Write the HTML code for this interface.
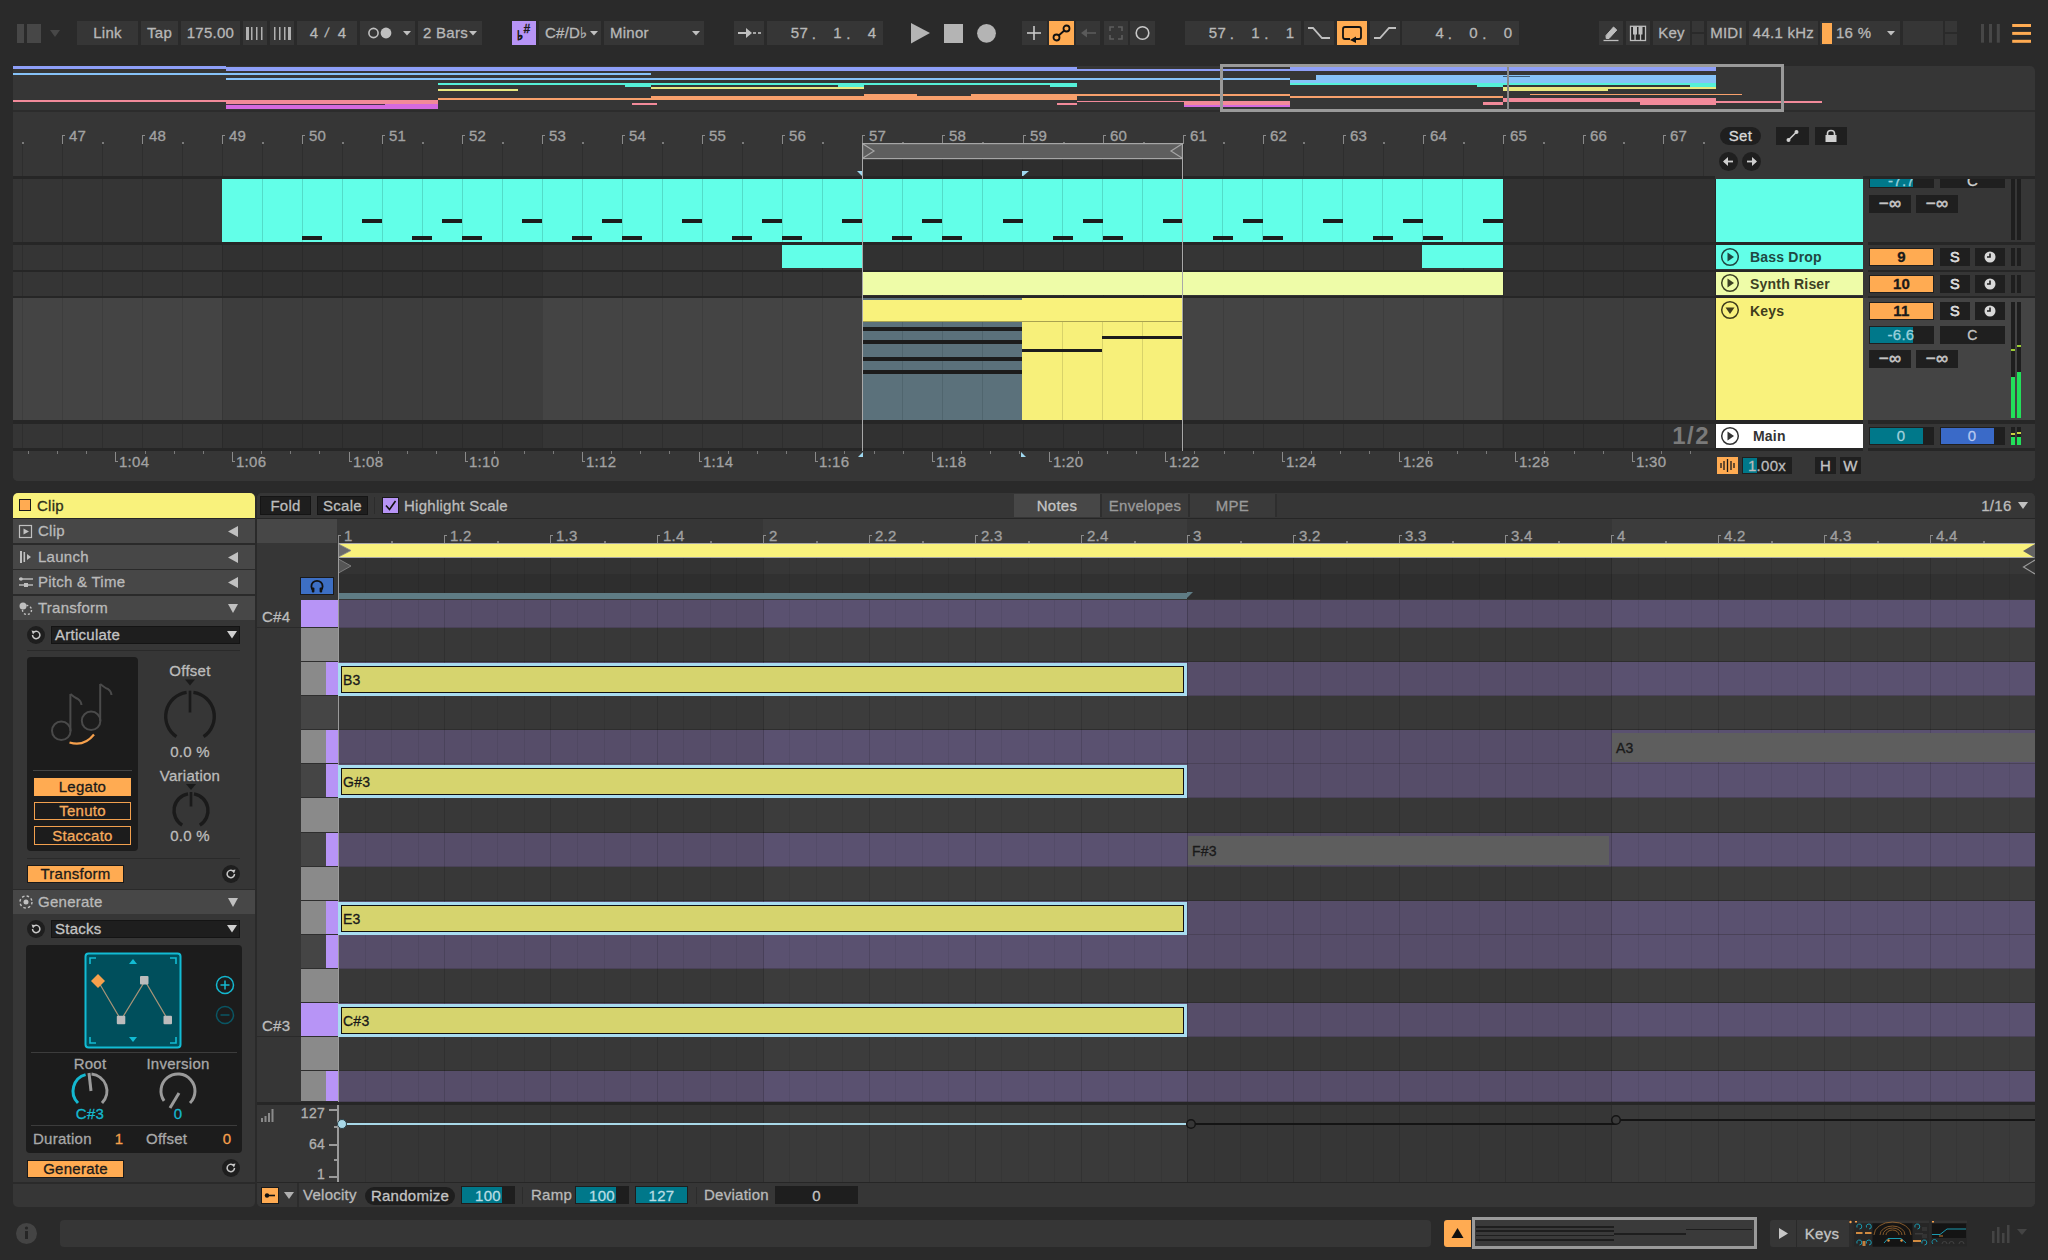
<!DOCTYPE html><html><head><meta charset="utf-8"><style>
html,body{margin:0;padding:0;}
body{width:2048px;height:1260px;background:#2a2a2a;position:relative;overflow:hidden;font-family:"Liberation Sans",sans-serif;}
body>div,body>svg{position:absolute;}
body>div{-webkit-text-stroke-width:0.3px;letter-spacing:0.26px;}
</style></head><body>
<div style="left:17px;top:24px;width:7px;height:19px;background:#474747;"></div>
<div style="left:27px;top:24px;width:14px;height:19px;background:#474747;"></div>
<svg style="left:49px;top:29px;" width="12" height="9" viewBox="0 0 12 9"><polygon points="1,1 11,1 6,8" fill="#474747"/></svg>
<div style="left:77px;top:21px;width:61px;height:24px;background:#363636;"></div>
<div style="left:-392.5px;width:1000px;text-align:center;top:18.2px;height:30px;line-height:30px;font-size:15px;color:#b8b8b8;font-weight:400;font-family:'Liberation Sans',sans-serif;white-space:pre;">Link</div>
<div style="left:141px;top:21px;width:37px;height:24px;background:#363636;"></div>
<div style="left:-340.5px;width:1000px;text-align:center;top:18.2px;height:30px;line-height:30px;font-size:15px;color:#b8b8b8;font-weight:400;font-family:'Liberation Sans',sans-serif;white-space:pre;">Tap</div>
<div style="left:181px;top:21px;width:59px;height:24px;background:#363636;"></div>
<div style="left:-289.5px;width:1000px;text-align:center;top:18.2px;height:30px;line-height:30px;font-size:15px;color:#b8b8b8;font-weight:400;font-family:'Liberation Sans',sans-serif;white-space:pre;">175.00</div>
<div style="left:243px;top:21px;width:24px;height:24px;background:#363636;"></div>
<div style="left:270px;top:21px;width:24px;height:24px;background:#363636;"></div>
<svg style="left:243px;top:21px;" width="24" height="24" viewBox="0 0 24 24"><rect x="3" y="6" width="3" height="13" fill="#b0b0b0"/><rect x="8" y="6" width="1.5" height="13" fill="#b0b0b0"/><rect x="13" y="6" width="1.5" height="13" fill="#b0b0b0"/><rect x="18" y="6" width="1.5" height="13" fill="#b0b0b0"/></svg>
<svg style="left:270px;top:21px;" width="24" height="24" viewBox="0 0 24 24"><rect x="4" y="6" width="1.5" height="13" fill="#b0b0b0"/><rect x="9" y="6" width="1.5" height="13" fill="#b0b0b0"/><rect x="14" y="6" width="1.5" height="13" fill="#b0b0b0"/><rect x="18" y="6" width="3" height="13" fill="#b0b0b0"/></svg>
<div style="left:297px;top:21px;width:60px;height:24px;background:#363636;"></div>
<div style="left:-186px;width:1000px;text-align:center;top:18.2px;height:30px;line-height:30px;font-size:15px;color:#b8b8b8;font-weight:400;font-family:'Liberation Sans',sans-serif;white-space:pre;">4</div>
<div style="left:-173px;width:1000px;text-align:center;top:20.2px;height:26px;line-height:26px;font-size:13px;color:#b8b8b8;font-weight:400;font-family:'Liberation Sans',sans-serif;white-space:pre;transform:skewX(-10deg)">/</div>
<div style="left:-158px;width:1000px;text-align:center;top:18.2px;height:30px;line-height:30px;font-size:15px;color:#b8b8b8;font-weight:400;font-family:'Liberation Sans',sans-serif;white-space:pre;">4</div>
<div style="left:360px;top:21px;width:55px;height:24px;background:#363636;"></div>
<svg style="left:360px;top:21px;" width="55" height="24" viewBox="0 0 55 24"><circle cx="13.5" cy="12" r="4.6" fill="none" stroke="#c0c0c0" stroke-width="1.6"/><circle cx="26" cy="12" r="5.4" fill="#c0c0c0"/><polygon points="43,10 51,10 47,14.5" fill="#c0c0c0"/></svg>
<div style="left:418px;top:21px;width:64px;height:24px;background:#363636;"></div>
<div style="left:423px;top:18.2px;height:30px;line-height:30px;font-size:15px;color:#b8b8b8;font-weight:400;font-family:'Liberation Sans',sans-serif;white-space:pre;">2 Bars</div>
<svg style="left:418px;top:21px;" width="64" height="24" viewBox="0 0 64 24"><polygon points="51,10 59,10 55,14.5" fill="#c0c0c0"/></svg>
<div style="left:512px;top:21px;width:24px;height:24px;background:#b794f6;"></div>
<div style="left:20px;width:1000px;text-align:center;top:23.0px;height:26px;line-height:26px;font-size:13px;color:#1a1a1a;font-weight:700;font-family:'Liberation Sans',sans-serif;white-space:pre;">♭</div>
<div style="left:27px;width:1000px;text-align:center;top:17.0px;height:24px;line-height:24px;font-size:12px;color:#1a1a1a;font-weight:700;font-family:'Liberation Sans',sans-serif;white-space:pre;">#</div>
<div style="left:539px;top:21px;width:62px;height:24px;background:#363636;"></div>
<div style="left:545px;top:18.2px;height:30px;line-height:30px;font-size:15px;color:#b8b8b8;font-weight:400;font-family:'Liberation Sans',sans-serif;white-space:pre;">C#/D♭</div>
<svg style="left:539px;top:21px;" width="62" height="24" viewBox="0 0 62 24"><polygon points="51,10 59,10 55,14.5" fill="#c0c0c0"/></svg>
<div style="left:604px;top:21px;width:100px;height:24px;background:#363636;"></div>
<div style="left:610px;top:18.2px;height:30px;line-height:30px;font-size:15px;color:#b8b8b8;font-weight:400;font-family:'Liberation Sans',sans-serif;white-space:pre;">Minor</div>
<svg style="left:604px;top:21px;" width="100" height="24" viewBox="0 0 100 24"><polygon points="88,10 96,10 92,14.5" fill="#c0c0c0"/></svg>
<div style="left:734px;top:21px;width:30px;height:24px;background:#363636;"></div>
<svg style="left:734px;top:21px;" width="30" height="24" viewBox="0 0 30 24"><line x1="4" y1="12" x2="16" y2="12" stroke="#c0c0c0" stroke-width="2"/><polygon points="12,7 18,12 12,17" fill="#c0c0c0"/><line x1="19" y1="12" x2="22" y2="12" stroke="#c0c0c0" stroke-width="1.6"/><line x1="24" y1="12" x2="27" y2="12" stroke="#c0c0c0" stroke-width="1.6"/></svg>
<div style="left:767px;top:21px;width:116px;height:24px;background:#363636;"></div>
<div style="left:-192px;width:1000px;text-align:right;top:18.2px;height:30px;line-height:30px;font-size:15px;color:#b8b8b8;font-weight:400;font-family:'Liberation Sans',sans-serif;white-space:pre;">57</div>
<div style="left:314px;width:1000px;text-align:center;top:19.2px;height:30px;line-height:30px;font-size:15px;color:#b8b8b8;font-weight:400;font-family:'Liberation Sans',sans-serif;white-space:pre;">.</div>
<div style="left:337.5px;width:1000px;text-align:center;top:18.2px;height:30px;line-height:30px;font-size:15px;color:#b8b8b8;font-weight:400;font-family:'Liberation Sans',sans-serif;white-space:pre;">1</div>
<div style="left:348.5px;width:1000px;text-align:center;top:19.2px;height:30px;line-height:30px;font-size:15px;color:#b8b8b8;font-weight:400;font-family:'Liberation Sans',sans-serif;white-space:pre;">.</div>
<div style="left:372px;width:1000px;text-align:center;top:18.2px;height:30px;line-height:30px;font-size:15px;color:#b8b8b8;font-weight:400;font-family:'Liberation Sans',sans-serif;white-space:pre;">4</div>
<svg style="left:905px;top:21px;" width="100" height="24" viewBox="0 0 100 24"><polygon points="6,2 25,12 6,22.5" fill="#b4b4b4"/><rect x="39" y="3" width="19" height="19" fill="#b4b4b4"/><circle cx="81.5" cy="12.3" r="9.4" fill="#b4b4b4"/></svg>
<div style="left:1022px;top:21px;width:25px;height:24px;background:#363636;"></div>
<svg style="left:1022px;top:21px;" width="25" height="24" viewBox="0 0 25 24"><line x1="5" y1="12" x2="19" y2="12" stroke="#c8c8c8" stroke-width="1.6"/><line x1="12" y1="5" x2="12" y2="19" stroke="#c8c8c8" stroke-width="1.6"/></svg>
<div style="left:1049px;top:21px;width:25px;height:24px;background:#ffab52;"></div>
<svg style="left:1049px;top:21px;" width="25" height="24" viewBox="0 0 25 24"><line x1="8" y1="16" x2="17" y2="8" stroke="#111" stroke-width="1.8"/><circle cx="7.5" cy="16.5" r="3" fill="#ffab52" stroke="#111" stroke-width="1.8"/><circle cx="17.5" cy="7.5" r="3" fill="#ffab52" stroke="#111" stroke-width="1.8"/></svg>
<div style="left:1076px;top:21px;width:24px;height:24px;background:#363636;"></div>
<svg style="left:1076px;top:21px;" width="24" height="24" viewBox="0 0 24 24"><line x1="8" y1="12" x2="20" y2="12" stroke="#5a5a5a" stroke-width="1.6"/><polygon points="5,12 11,7.5 11,16.5" fill="#5a5a5a"/></svg>
<div style="left:1104px;top:21px;width:24px;height:24px;background:#363636;"></div>
<svg style="left:1104px;top:21px;" width="24" height="24" viewBox="0 0 24 24"><path d="M6,10 V6 H10 M14,6 H18 V10 M18,14 V18 H14 M10,18 H6 V14" fill="none" stroke="#5e5e5e" stroke-width="1.6"/></svg>
<div style="left:1130px;top:21px;width:25px;height:24px;background:#363636;"></div>
<svg style="left:1130px;top:21px;" width="25" height="24" viewBox="0 0 25 24"><circle cx="12.5" cy="12" r="6.3" fill="none" stroke="#c8c8c8" stroke-width="1.6"/></svg>
<div style="left:1185px;top:21px;width:116px;height:24px;background:#363636;"></div>
<div style="left:226px;width:1000px;text-align:right;top:18.2px;height:30px;line-height:30px;font-size:15px;color:#b8b8b8;font-weight:400;font-family:'Liberation Sans',sans-serif;white-space:pre;">57</div>
<div style="left:732px;width:1000px;text-align:center;top:19.2px;height:30px;line-height:30px;font-size:15px;color:#b8b8b8;font-weight:400;font-family:'Liberation Sans',sans-serif;white-space:pre;">.</div>
<div style="left:755.5px;width:1000px;text-align:center;top:18.2px;height:30px;line-height:30px;font-size:15px;color:#b8b8b8;font-weight:400;font-family:'Liberation Sans',sans-serif;white-space:pre;">1</div>
<div style="left:766.5px;width:1000px;text-align:center;top:19.2px;height:30px;line-height:30px;font-size:15px;color:#b8b8b8;font-weight:400;font-family:'Liberation Sans',sans-serif;white-space:pre;">.</div>
<div style="left:790px;width:1000px;text-align:center;top:18.2px;height:30px;line-height:30px;font-size:15px;color:#b8b8b8;font-weight:400;font-family:'Liberation Sans',sans-serif;white-space:pre;">1</div>
<div style="left:1304px;top:21px;width:30px;height:24px;background:#363636;"></div>
<svg style="left:1304px;top:21px;" width="30" height="24" viewBox="0 0 30 24"><path d="M4,7 H9 L18,17 H26" fill="none" stroke="#c0c0c0" stroke-width="1.8"/></svg>
<div style="left:1337px;top:21px;width:30px;height:24px;background:#ffab52;"></div>
<svg style="left:1337px;top:21px;" width="30" height="24" viewBox="0 0 30 24"><path d="M13,18 H8 Q6,18 6,16 V8 Q6,6 8,6 H22 Q24,6 24,8 V16 Q24,18 22,18 H19" fill="none" stroke="#111" stroke-width="1.8"/><polygon points="13,19 19,15.5 19,22" fill="#111"/></svg>
<div style="left:1370px;top:21px;width:30px;height:24px;background:#363636;"></div>
<svg style="left:1370px;top:21px;" width="30" height="24" viewBox="0 0 30 24"><path d="M4,17 H10 L19,7 H26" fill="none" stroke="#c0c0c0" stroke-width="1.8"/></svg>
<div style="left:1402px;top:21px;width:117px;height:24px;background:#363636;"></div>
<div style="left:444px;width:1000px;text-align:right;top:18.2px;height:30px;line-height:30px;font-size:15px;color:#b8b8b8;font-weight:400;font-family:'Liberation Sans',sans-serif;white-space:pre;">4</div>
<div style="left:950px;width:1000px;text-align:center;top:19.2px;height:30px;line-height:30px;font-size:15px;color:#b8b8b8;font-weight:400;font-family:'Liberation Sans',sans-serif;white-space:pre;">.</div>
<div style="left:973.5px;width:1000px;text-align:center;top:18.2px;height:30px;line-height:30px;font-size:15px;color:#b8b8b8;font-weight:400;font-family:'Liberation Sans',sans-serif;white-space:pre;">0</div>
<div style="left:984.5px;width:1000px;text-align:center;top:19.2px;height:30px;line-height:30px;font-size:15px;color:#b8b8b8;font-weight:400;font-family:'Liberation Sans',sans-serif;white-space:pre;">.</div>
<div style="left:1008px;width:1000px;text-align:center;top:18.2px;height:30px;line-height:30px;font-size:15px;color:#b8b8b8;font-weight:400;font-family:'Liberation Sans',sans-serif;white-space:pre;">0</div>
<div style="left:1599px;top:21px;width:24px;height:24px;background:#363636;"></div>
<svg style="left:1599px;top:21px;" width="24" height="24" viewBox="0 0 24 24"><path d="M7,14.5 L14.5,6 L17.8,9 L10,17.5 L7.2,17.5 Z" fill="#bdbdbd" stroke="#bdbdbd" stroke-width="1" stroke-linejoin="round"/><line x1="4.5" y1="19.5" x2="19.5" y2="19.5" stroke="#bdbdbd" stroke-width="1.3"/></svg>
<div style="left:1626px;top:21px;width:24px;height:24px;background:#363636;"></div>
<svg style="left:1626px;top:21px;" width="24" height="24" viewBox="0 0 24 24"><rect x="4.5" y="5.3" width="15" height="14.2" fill="#262626" stroke="#bdbdbd" stroke-width="1.3"/><rect x="7" y="5.5" width="4" height="8" fill="#bdbdbd"/><rect x="12.5" y="5.5" width="4" height="8" fill="#bdbdbd"/><rect x="8.4" y="12" width="1.3" height="7.5" fill="#bdbdbd"/><rect x="13.9" y="12" width="1.3" height="7.5" fill="#bdbdbd"/></svg>
<div style="left:1653px;top:21px;width:37px;height:24px;background:#363636;"></div>
<div style="left:1171.5px;width:1000px;text-align:center;top:18.2px;height:30px;line-height:30px;font-size:15px;color:#b8b8b8;font-weight:400;font-family:'Liberation Sans',sans-serif;white-space:pre;">Key</div>
<div style="left:1692px;top:21px;width:12px;height:11px;background:#363636;"></div>
<div style="left:1692px;top:34px;width:12px;height:11px;background:#363636;"></div>
<div style="left:1707px;top:21px;width:39px;height:24px;background:#363636;"></div>
<div style="left:1226.5px;width:1000px;text-align:center;top:18.2px;height:30px;line-height:30px;font-size:15px;color:#b8b8b8;font-weight:400;font-family:'Liberation Sans',sans-serif;white-space:pre;">MIDI</div>
<div style="left:1749px;top:21px;width:69px;height:24px;background:#363636;"></div>
<div style="left:1283.5px;width:1000px;text-align:center;top:18.2px;height:30px;line-height:30px;font-size:15px;color:#b8b8b8;font-weight:400;font-family:'Liberation Sans',sans-serif;white-space:pre;">44.1 kHz</div>
<div style="left:1820px;top:21px;width:80px;height:24px;background:#363636;"></div>
<div style="left:1822px;top:23px;width:10px;height:21px;background:#ffab52;"></div>
<div style="left:1836px;top:18.2px;height:30px;line-height:30px;font-size:15px;color:#b8b8b8;font-weight:400;font-family:'Liberation Sans',sans-serif;white-space:pre;">16 %</div>
<svg style="left:1820px;top:21px;" width="80" height="24" viewBox="0 0 80 24"><polygon points="67,10 75,10 71,14.5" fill="#c0c0c0"/></svg>
<div style="left:1903px;top:21px;width:40px;height:24px;background:#363636;"></div>
<div style="left:1945px;top:21px;width:12px;height:11px;background:#363636;"></div>
<div style="left:1945px;top:34px;width:12px;height:11px;background:#363636;"></div>
<svg style="left:1978px;top:21px;" width="26" height="24" viewBox="0 0 26 24"><rect x="3" y="3" width="3" height="18.7" fill="#474747"/><rect x="11" y="3" width="3" height="18.7" fill="#474747"/><rect x="18.8" y="3" width="3" height="18.7" fill="#474747"/></svg>
<svg style="left:2010px;top:21px;" width="24" height="24" viewBox="0 0 24 24"><rect x="2.2" y="3" width="18.8" height="3" fill="#ffab52"/><rect x="2.2" y="10.9" width="18.8" height="3" fill="#ffab52"/><rect x="2.2" y="18.8" width="18.8" height="3" fill="#ffab52"/></svg>
<div style="left:13px;top:66px;width:2022px;height:415px;background:#363636;border-radius:5px;"></div>
<div style="left:13px;top:66px;width:213px;height:3px;background:#8e9ff8;"></div>
<div style="left:13px;top:73px;width:213px;height:2px;background:#86c2f8;"></div>
<div style="left:13px;top:100px;width:213px;height:2px;background:#f28a9a;"></div>
<div style="left:226px;top:67px;width:212px;height:4px;background:#8e9ff8;"></div>
<div style="left:226px;top:73px;width:212px;height:2px;background:#86c2f8;"></div>
<div style="left:226px;top:78px;width:212px;height:2px;background:#86c2f8;"></div>
<div style="left:226px;top:100px;width:212px;height:4px;background:#f28a9a;"></div>
<div style="left:226px;top:104px;width:212px;height:5px;background:#d46ae0;"></div>
<div style="left:226px;top:104px;width:159px;height:1px;background:#4a3050;"></div>
<div style="left:438px;top:67px;width:213px;height:4px;background:#8e9ff8;"></div>
<div style="left:438px;top:73px;width:213px;height:2px;background:#86c2f8;"></div>
<div style="left:438px;top:78px;width:213px;height:2px;background:#86c2f8;"></div>
<div style="left:438px;top:83px;width:213px;height:2px;background:#55f0d8;"></div>
<div style="left:625px;top:83px;width:26px;height:4px;background:#55f0d8;"></div>
<div style="left:438px;top:89px;width:80px;height:2px;background:#e8e880;"></div>
<div style="left:438px;top:98px;width:213px;height:2px;background:#f8a06c;"></div>
<div style="left:632px;top:103px;width:25px;height:2px;background:#f28a9a;"></div>
<div style="left:651px;top:67px;width:213px;height:4px;background:#8e9ff8;"></div>
<div style="left:651px;top:78px;width:213px;height:2px;background:#86c2f8;"></div>
<div style="left:651px;top:83px;width:213px;height:2px;background:#55f0d8;"></div>
<div style="left:838px;top:83px;width:26px;height:4px;background:#55f0d8;"></div>
<div style="left:651px;top:87px;width:213px;height:2px;background:#e8e880;"></div>
<div style="left:651px;top:96px;width:213px;height:4px;background:#f8a06c;"></div>
<div style="left:864px;top:67px;width:213px;height:4px;background:#8e9ff8;"></div>
<div style="left:864px;top:78px;width:213px;height:2px;background:#86c2f8;"></div>
<div style="left:864px;top:83px;width:213px;height:2px;background:#55f0d8;"></div>
<div style="left:1050px;top:83px;width:27px;height:4px;background:#55f0d8;"></div>
<div style="left:864px;top:94px;width:53px;height:6px;background:#f8a06c;"></div>
<div style="left:917px;top:96px;width:54px;height:4px;background:#f8a06c;"></div>
<div style="left:971px;top:94px;width:106px;height:6px;background:#f8a06c;"></div>
<div style="left:1057px;top:103px;width:20px;height:2px;background:#f28a9a;"></div>
<div style="left:1077px;top:69px;width:213px;height:2px;background:#8e9ff8;"></div>
<div style="left:1077px;top:78px;width:213px;height:2px;background:#86c2f8;"></div>
<div style="left:1077px;top:94px;width:213px;height:2px;background:#f8a06c;"></div>
<div style="left:1077px;top:101px;width:213px;height:1px;background:#f28a9a;"></div>
<div style="left:1184px;top:101px;width:106px;height:4px;background:#f28a9a;"></div>
<div style="left:1184px;top:105px;width:106px;height:2px;background:#d46ae0;"></div>
<div style="left:1290px;top:67px;width:213px;height:4px;background:#8e9ff8;"></div>
<div style="left:1290px;top:80px;width:26px;height:3px;background:#86c2f8;"></div>
<div style="left:1316px;top:75px;width:187px;height:8px;background:#86c2f8;"></div>
<div style="left:1290px;top:83px;width:213px;height:2px;background:#55f0d8;"></div>
<div style="left:1477px;top:83px;width:26px;height:4px;background:#55f0d8;"></div>
<div style="left:1290px;top:96px;width:213px;height:2px;background:#f8a06c;"></div>
<div style="left:1483px;top:102px;width:20px;height:3px;background:#f28a9a;"></div>
<div style="left:1503px;top:67px;width:213px;height:4px;background:#8e9ff8;"></div>
<div style="left:1503px;top:75px;width:213px;height:8px;background:#86c2f8;"></div>
<div style="left:1503px;top:76px;width:27px;height:1px;background:#3a5a7a;"></div>
<div style="left:1503px;top:83px;width:213px;height:2px;background:#55f0d8;"></div>
<div style="left:1690px;top:83px;width:26px;height:5px;background:#55f0d8;"></div>
<div style="left:1503px;top:87px;width:213px;height:2px;background:#e8e880;"></div>
<div style="left:1503px;top:89px;width:105px;height:2px;background:#e8e880;"></div>
<div style="left:1530px;top:94px;width:212px;height:1px;background:#f8a06c;"></div>
<div style="left:1503px;top:98px;width:213px;height:4px;background:#f28a9a;"></div>
<div style="left:1640px;top:101px;width:76px;height:4px;background:#f28a9a;"></div>
<div style="left:1716px;top:101px;width:106px;height:2px;background:#f28a9a;"></div>
<div style="left:226px;top:227px;width:-160px;height:-155px;background:#3a4aa8;"></div>
<div style="left:438px;top:439px;width:-372px;height:-367px;background:#3a4aa8;"></div>
<div style="left:651px;top:652px;width:-585px;height:-580px;background:#3a4aa8;"></div>
<div style="left:864px;top:865px;width:-798px;height:-793px;background:#3a4aa8;"></div>
<div style="left:1077px;top:1078px;width:-1011px;height:-1006px;background:#3a4aa8;"></div>
<div style="left:1290px;top:1291px;width:-1224px;height:-1219px;background:#3a4aa8;"></div>
<div style="left:1503px;top:1504px;width:-1437px;height:-1432px;background:#3a4aa8;"></div>
<div style="left:13px;top:110px;width:2022px;height:2px;background:#2c2c2c;"></div>
<div style="left:1220px;top:64px;width:564px;height:48px;background:transparent;border:3px solid #9a9a9a;box-sizing:border-box;"></div>
<div style="left:1507px;top:67px;width:2px;height:43px;background:#8a8a8a;"></div>
<div style="left:13px;top:112px;width:1702px;height:64px;background:#363636;"></div>
<div style="left:69px;top:121.0px;height:30px;line-height:30px;font-size:15px;color:#a2a2a2;font-weight:400;font-family:'Liberation Sans',sans-serif;white-space:pre;">47</div>
<div style="left:62px;top:135px;width:1px;height:9px;background:#8a8a8a;"></div>
<div style="left:62px;top:135px;width:3px;height:1px;background:#8a8a8a;"></div>
<div style="left:62px;top:144px;width:1px;height:32px;background:#2e2e2e;"></div>
<div style="left:102px;top:142px;width:2px;height:2px;background:#7a7a7a;"></div>
<div style="left:102px;top:144px;width:1px;height:32px;background:#2e2e2e;"></div>
<div style="left:149px;top:121.0px;height:30px;line-height:30px;font-size:15px;color:#a2a2a2;font-weight:400;font-family:'Liberation Sans',sans-serif;white-space:pre;">48</div>
<div style="left:142px;top:135px;width:1px;height:9px;background:#8a8a8a;"></div>
<div style="left:142px;top:135px;width:3px;height:1px;background:#8a8a8a;"></div>
<div style="left:142px;top:144px;width:1px;height:32px;background:#2e2e2e;"></div>
<div style="left:182px;top:142px;width:2px;height:2px;background:#7a7a7a;"></div>
<div style="left:182px;top:144px;width:1px;height:32px;background:#2e2e2e;"></div>
<div style="left:229px;top:121.0px;height:30px;line-height:30px;font-size:15px;color:#a2a2a2;font-weight:400;font-family:'Liberation Sans',sans-serif;white-space:pre;">49</div>
<div style="left:222px;top:135px;width:1px;height:9px;background:#8a8a8a;"></div>
<div style="left:222px;top:135px;width:3px;height:1px;background:#8a8a8a;"></div>
<div style="left:222px;top:144px;width:1px;height:32px;background:#2e2e2e;"></div>
<div style="left:262px;top:142px;width:2px;height:2px;background:#7a7a7a;"></div>
<div style="left:262px;top:144px;width:1px;height:32px;background:#2e2e2e;"></div>
<div style="left:309px;top:121.0px;height:30px;line-height:30px;font-size:15px;color:#a2a2a2;font-weight:400;font-family:'Liberation Sans',sans-serif;white-space:pre;">50</div>
<div style="left:302px;top:135px;width:1px;height:9px;background:#8a8a8a;"></div>
<div style="left:302px;top:135px;width:3px;height:1px;background:#8a8a8a;"></div>
<div style="left:302px;top:144px;width:1px;height:32px;background:#2e2e2e;"></div>
<div style="left:342px;top:142px;width:2px;height:2px;background:#7a7a7a;"></div>
<div style="left:342px;top:144px;width:1px;height:32px;background:#2e2e2e;"></div>
<div style="left:389px;top:121.0px;height:30px;line-height:30px;font-size:15px;color:#a2a2a2;font-weight:400;font-family:'Liberation Sans',sans-serif;white-space:pre;">51</div>
<div style="left:382px;top:135px;width:1px;height:9px;background:#8a8a8a;"></div>
<div style="left:382px;top:135px;width:3px;height:1px;background:#8a8a8a;"></div>
<div style="left:382px;top:144px;width:1px;height:32px;background:#2e2e2e;"></div>
<div style="left:422px;top:142px;width:2px;height:2px;background:#7a7a7a;"></div>
<div style="left:422px;top:144px;width:1px;height:32px;background:#2e2e2e;"></div>
<div style="left:469px;top:121.0px;height:30px;line-height:30px;font-size:15px;color:#a2a2a2;font-weight:400;font-family:'Liberation Sans',sans-serif;white-space:pre;">52</div>
<div style="left:462px;top:135px;width:1px;height:9px;background:#8a8a8a;"></div>
<div style="left:462px;top:135px;width:3px;height:1px;background:#8a8a8a;"></div>
<div style="left:462px;top:144px;width:1px;height:32px;background:#2e2e2e;"></div>
<div style="left:502px;top:142px;width:2px;height:2px;background:#7a7a7a;"></div>
<div style="left:502px;top:144px;width:1px;height:32px;background:#2e2e2e;"></div>
<div style="left:549px;top:121.0px;height:30px;line-height:30px;font-size:15px;color:#a2a2a2;font-weight:400;font-family:'Liberation Sans',sans-serif;white-space:pre;">53</div>
<div style="left:542px;top:135px;width:1px;height:9px;background:#8a8a8a;"></div>
<div style="left:542px;top:135px;width:3px;height:1px;background:#8a8a8a;"></div>
<div style="left:542px;top:144px;width:1px;height:32px;background:#2e2e2e;"></div>
<div style="left:582px;top:142px;width:2px;height:2px;background:#7a7a7a;"></div>
<div style="left:582px;top:144px;width:1px;height:32px;background:#2e2e2e;"></div>
<div style="left:629px;top:121.0px;height:30px;line-height:30px;font-size:15px;color:#a2a2a2;font-weight:400;font-family:'Liberation Sans',sans-serif;white-space:pre;">54</div>
<div style="left:622px;top:135px;width:1px;height:9px;background:#8a8a8a;"></div>
<div style="left:622px;top:135px;width:3px;height:1px;background:#8a8a8a;"></div>
<div style="left:622px;top:144px;width:1px;height:32px;background:#2e2e2e;"></div>
<div style="left:662px;top:142px;width:2px;height:2px;background:#7a7a7a;"></div>
<div style="left:662px;top:144px;width:1px;height:32px;background:#2e2e2e;"></div>
<div style="left:709px;top:121.0px;height:30px;line-height:30px;font-size:15px;color:#a2a2a2;font-weight:400;font-family:'Liberation Sans',sans-serif;white-space:pre;">55</div>
<div style="left:702px;top:135px;width:1px;height:9px;background:#8a8a8a;"></div>
<div style="left:702px;top:135px;width:3px;height:1px;background:#8a8a8a;"></div>
<div style="left:702px;top:144px;width:1px;height:32px;background:#2e2e2e;"></div>
<div style="left:742px;top:142px;width:2px;height:2px;background:#7a7a7a;"></div>
<div style="left:742px;top:144px;width:1px;height:32px;background:#2e2e2e;"></div>
<div style="left:789px;top:121.0px;height:30px;line-height:30px;font-size:15px;color:#a2a2a2;font-weight:400;font-family:'Liberation Sans',sans-serif;white-space:pre;">56</div>
<div style="left:782px;top:135px;width:1px;height:9px;background:#8a8a8a;"></div>
<div style="left:782px;top:135px;width:3px;height:1px;background:#8a8a8a;"></div>
<div style="left:782px;top:144px;width:1px;height:32px;background:#2e2e2e;"></div>
<div style="left:822px;top:142px;width:2px;height:2px;background:#7a7a7a;"></div>
<div style="left:822px;top:144px;width:1px;height:32px;background:#2e2e2e;"></div>
<div style="left:869px;top:121.0px;height:30px;line-height:30px;font-size:15px;color:#a2a2a2;font-weight:400;font-family:'Liberation Sans',sans-serif;white-space:pre;">57</div>
<div style="left:862px;top:135px;width:1px;height:9px;background:#8a8a8a;"></div>
<div style="left:862px;top:135px;width:3px;height:1px;background:#8a8a8a;"></div>
<div style="left:862px;top:144px;width:1px;height:32px;background:#2e2e2e;"></div>
<div style="left:902px;top:142px;width:2px;height:2px;background:#7a7a7a;"></div>
<div style="left:902px;top:144px;width:1px;height:32px;background:#2e2e2e;"></div>
<div style="left:949px;top:121.0px;height:30px;line-height:30px;font-size:15px;color:#a2a2a2;font-weight:400;font-family:'Liberation Sans',sans-serif;white-space:pre;">58</div>
<div style="left:942px;top:135px;width:1px;height:9px;background:#8a8a8a;"></div>
<div style="left:942px;top:135px;width:3px;height:1px;background:#8a8a8a;"></div>
<div style="left:942px;top:144px;width:1px;height:32px;background:#2e2e2e;"></div>
<div style="left:982px;top:142px;width:2px;height:2px;background:#7a7a7a;"></div>
<div style="left:982px;top:144px;width:1px;height:32px;background:#2e2e2e;"></div>
<div style="left:1030px;top:121.0px;height:30px;line-height:30px;font-size:15px;color:#a2a2a2;font-weight:400;font-family:'Liberation Sans',sans-serif;white-space:pre;">59</div>
<div style="left:1023px;top:135px;width:1px;height:9px;background:#8a8a8a;"></div>
<div style="left:1023px;top:135px;width:3px;height:1px;background:#8a8a8a;"></div>
<div style="left:1023px;top:144px;width:1px;height:32px;background:#2e2e2e;"></div>
<div style="left:1063px;top:142px;width:2px;height:2px;background:#7a7a7a;"></div>
<div style="left:1063px;top:144px;width:1px;height:32px;background:#2e2e2e;"></div>
<div style="left:1110px;top:121.0px;height:30px;line-height:30px;font-size:15px;color:#a2a2a2;font-weight:400;font-family:'Liberation Sans',sans-serif;white-space:pre;">60</div>
<div style="left:1103px;top:135px;width:1px;height:9px;background:#8a8a8a;"></div>
<div style="left:1103px;top:135px;width:3px;height:1px;background:#8a8a8a;"></div>
<div style="left:1103px;top:144px;width:1px;height:32px;background:#2e2e2e;"></div>
<div style="left:1143px;top:142px;width:2px;height:2px;background:#7a7a7a;"></div>
<div style="left:1143px;top:144px;width:1px;height:32px;background:#2e2e2e;"></div>
<div style="left:1190px;top:121.0px;height:30px;line-height:30px;font-size:15px;color:#a2a2a2;font-weight:400;font-family:'Liberation Sans',sans-serif;white-space:pre;">61</div>
<div style="left:1183px;top:135px;width:1px;height:9px;background:#8a8a8a;"></div>
<div style="left:1183px;top:135px;width:3px;height:1px;background:#8a8a8a;"></div>
<div style="left:1183px;top:144px;width:1px;height:32px;background:#2e2e2e;"></div>
<div style="left:1223px;top:142px;width:2px;height:2px;background:#7a7a7a;"></div>
<div style="left:1223px;top:144px;width:1px;height:32px;background:#2e2e2e;"></div>
<div style="left:1270px;top:121.0px;height:30px;line-height:30px;font-size:15px;color:#a2a2a2;font-weight:400;font-family:'Liberation Sans',sans-serif;white-space:pre;">62</div>
<div style="left:1263px;top:135px;width:1px;height:9px;background:#8a8a8a;"></div>
<div style="left:1263px;top:135px;width:3px;height:1px;background:#8a8a8a;"></div>
<div style="left:1263px;top:144px;width:1px;height:32px;background:#2e2e2e;"></div>
<div style="left:1303px;top:142px;width:2px;height:2px;background:#7a7a7a;"></div>
<div style="left:1303px;top:144px;width:1px;height:32px;background:#2e2e2e;"></div>
<div style="left:1350px;top:121.0px;height:30px;line-height:30px;font-size:15px;color:#a2a2a2;font-weight:400;font-family:'Liberation Sans',sans-serif;white-space:pre;">63</div>
<div style="left:1343px;top:135px;width:1px;height:9px;background:#8a8a8a;"></div>
<div style="left:1343px;top:135px;width:3px;height:1px;background:#8a8a8a;"></div>
<div style="left:1343px;top:144px;width:1px;height:32px;background:#2e2e2e;"></div>
<div style="left:1383px;top:142px;width:2px;height:2px;background:#7a7a7a;"></div>
<div style="left:1383px;top:144px;width:1px;height:32px;background:#2e2e2e;"></div>
<div style="left:1430px;top:121.0px;height:30px;line-height:30px;font-size:15px;color:#a2a2a2;font-weight:400;font-family:'Liberation Sans',sans-serif;white-space:pre;">64</div>
<div style="left:1423px;top:135px;width:1px;height:9px;background:#8a8a8a;"></div>
<div style="left:1423px;top:135px;width:3px;height:1px;background:#8a8a8a;"></div>
<div style="left:1423px;top:144px;width:1px;height:32px;background:#2e2e2e;"></div>
<div style="left:1463px;top:142px;width:2px;height:2px;background:#7a7a7a;"></div>
<div style="left:1463px;top:144px;width:1px;height:32px;background:#2e2e2e;"></div>
<div style="left:1510px;top:121.0px;height:30px;line-height:30px;font-size:15px;color:#a2a2a2;font-weight:400;font-family:'Liberation Sans',sans-serif;white-space:pre;">65</div>
<div style="left:1503px;top:135px;width:1px;height:9px;background:#8a8a8a;"></div>
<div style="left:1503px;top:135px;width:3px;height:1px;background:#8a8a8a;"></div>
<div style="left:1503px;top:144px;width:1px;height:32px;background:#2e2e2e;"></div>
<div style="left:1543px;top:142px;width:2px;height:2px;background:#7a7a7a;"></div>
<div style="left:1543px;top:144px;width:1px;height:32px;background:#2e2e2e;"></div>
<div style="left:1590px;top:121.0px;height:30px;line-height:30px;font-size:15px;color:#a2a2a2;font-weight:400;font-family:'Liberation Sans',sans-serif;white-space:pre;">66</div>
<div style="left:1583px;top:135px;width:1px;height:9px;background:#8a8a8a;"></div>
<div style="left:1583px;top:135px;width:3px;height:1px;background:#8a8a8a;"></div>
<div style="left:1583px;top:144px;width:1px;height:32px;background:#2e2e2e;"></div>
<div style="left:1623px;top:142px;width:2px;height:2px;background:#7a7a7a;"></div>
<div style="left:1623px;top:144px;width:1px;height:32px;background:#2e2e2e;"></div>
<div style="left:1670px;top:121.0px;height:30px;line-height:30px;font-size:15px;color:#a2a2a2;font-weight:400;font-family:'Liberation Sans',sans-serif;white-space:pre;">67</div>
<div style="left:1663px;top:135px;width:1px;height:9px;background:#8a8a8a;"></div>
<div style="left:1663px;top:135px;width:3px;height:1px;background:#8a8a8a;"></div>
<div style="left:1663px;top:144px;width:1px;height:32px;background:#2e2e2e;"></div>
<div style="left:1703px;top:142px;width:2px;height:2px;background:#7a7a7a;"></div>
<div style="left:1703px;top:144px;width:1px;height:32px;background:#2e2e2e;"></div>
<div style="left:22px;top:142px;width:2px;height:2px;background:#7a7a7a;"></div>
<div style="left:22px;top:144px;width:1px;height:32px;background:#2e2e2e;"></div>
<div style="left:863px;top:159px;width:319px;height:17px;background:#2e2e2e;"></div>
<div style="left:902px;top:159px;width:1px;height:17px;background:#262626;"></div>
<div style="left:942px;top:159px;width:1px;height:17px;background:#262626;"></div>
<div style="left:982px;top:159px;width:1px;height:17px;background:#262626;"></div>
<div style="left:1022px;top:159px;width:1px;height:17px;background:#262626;"></div>
<div style="left:1062px;top:159px;width:1px;height:17px;background:#262626;"></div>
<div style="left:1102px;top:159px;width:1px;height:17px;background:#262626;"></div>
<div style="left:1142px;top:159px;width:1px;height:17px;background:#262626;"></div>
<svg style="left:862px;top:143px;" width="321" height="17" viewBox="0 0 321 17"><rect x="0.6" y="0.6" width="319.8" height="15" fill="#5e5e5e" stroke="#a6a6a6" stroke-width="1.2"/><polyline points="1,1 12,8 1,15" fill="none" stroke="#a6a6a6" stroke-width="1.2"/><polyline points="320,1 309,8 320,15" fill="none" stroke="#a6a6a6" stroke-width="1.2"/></svg>
<svg style="left:856px;top:170px;" width="10" height="8" viewBox="0 0 10 8"><polygon points="1,1 7,1 7,7" fill="#9fd8f0"/></svg>
<svg style="left:1020px;top:170px;" width="10" height="8" viewBox="0 0 10 8"><polygon points="2,1 9,1 2,7" fill="#9fd8f0"/></svg>
<div style="left:13px;top:176px;width:1702px;height:3px;background:#262626;"></div>
<div style="left:13px;top:242px;width:2022px;height:3px;background:#262626;"></div>
<div style="left:13px;top:270px;width:2022px;height:2px;background:#262626;"></div>
<div style="left:13px;top:296px;width:2022px;height:2px;background:#262626;"></div>
<div style="left:13px;top:420px;width:2022px;height:4px;background:#262626;"></div>
<div style="left:13px;top:448px;width:2022px;height:3px;background:#262626;"></div>
<div style="left:13px;top:179px;width:209px;height:63px;background:#353535;"></div>
<div style="left:222px;top:179px;width:320px;height:63px;background:#313131;"></div>
<div style="left:542px;top:179px;width:320px;height:63px;background:#353535;"></div>
<div style="left:862px;top:179px;width:320px;height:63px;background:#313131;"></div>
<div style="left:1182px;top:179px;width:320px;height:63px;background:#353535;"></div>
<div style="left:1502px;top:179px;width:213px;height:63px;background:#313131;"></div>
<div style="left:22px;top:179px;width:1px;height:63px;background:rgba(0,0,0,0.13);"></div>
<div style="left:62px;top:179px;width:1px;height:63px;background:rgba(0,0,0,0.13);"></div>
<div style="left:102px;top:179px;width:1px;height:63px;background:rgba(0,0,0,0.13);"></div>
<div style="left:142px;top:179px;width:1px;height:63px;background:rgba(0,0,0,0.13);"></div>
<div style="left:182px;top:179px;width:1px;height:63px;background:rgba(0,0,0,0.13);"></div>
<div style="left:222px;top:179px;width:1px;height:63px;background:rgba(0,0,0,0.13);"></div>
<div style="left:262px;top:179px;width:1px;height:63px;background:rgba(0,0,0,0.13);"></div>
<div style="left:302px;top:179px;width:1px;height:63px;background:rgba(0,0,0,0.13);"></div>
<div style="left:342px;top:179px;width:1px;height:63px;background:rgba(0,0,0,0.13);"></div>
<div style="left:382px;top:179px;width:1px;height:63px;background:rgba(0,0,0,0.13);"></div>
<div style="left:422px;top:179px;width:1px;height:63px;background:rgba(0,0,0,0.13);"></div>
<div style="left:462px;top:179px;width:1px;height:63px;background:rgba(0,0,0,0.13);"></div>
<div style="left:502px;top:179px;width:1px;height:63px;background:rgba(0,0,0,0.13);"></div>
<div style="left:542px;top:179px;width:1px;height:63px;background:rgba(0,0,0,0.13);"></div>
<div style="left:582px;top:179px;width:1px;height:63px;background:rgba(0,0,0,0.13);"></div>
<div style="left:622px;top:179px;width:1px;height:63px;background:rgba(0,0,0,0.13);"></div>
<div style="left:662px;top:179px;width:1px;height:63px;background:rgba(0,0,0,0.13);"></div>
<div style="left:702px;top:179px;width:1px;height:63px;background:rgba(0,0,0,0.13);"></div>
<div style="left:742px;top:179px;width:1px;height:63px;background:rgba(0,0,0,0.13);"></div>
<div style="left:782px;top:179px;width:1px;height:63px;background:rgba(0,0,0,0.13);"></div>
<div style="left:822px;top:179px;width:1px;height:63px;background:rgba(0,0,0,0.13);"></div>
<div style="left:862px;top:179px;width:1px;height:63px;background:rgba(0,0,0,0.13);"></div>
<div style="left:902px;top:179px;width:1px;height:63px;background:rgba(0,0,0,0.13);"></div>
<div style="left:942px;top:179px;width:1px;height:63px;background:rgba(0,0,0,0.13);"></div>
<div style="left:983px;top:179px;width:1px;height:63px;background:rgba(0,0,0,0.13);"></div>
<div style="left:1023px;top:179px;width:1px;height:63px;background:rgba(0,0,0,0.13);"></div>
<div style="left:1063px;top:179px;width:1px;height:63px;background:rgba(0,0,0,0.13);"></div>
<div style="left:1103px;top:179px;width:1px;height:63px;background:rgba(0,0,0,0.13);"></div>
<div style="left:1143px;top:179px;width:1px;height:63px;background:rgba(0,0,0,0.13);"></div>
<div style="left:1183px;top:179px;width:1px;height:63px;background:rgba(0,0,0,0.13);"></div>
<div style="left:1223px;top:179px;width:1px;height:63px;background:rgba(0,0,0,0.13);"></div>
<div style="left:1263px;top:179px;width:1px;height:63px;background:rgba(0,0,0,0.13);"></div>
<div style="left:1303px;top:179px;width:1px;height:63px;background:rgba(0,0,0,0.13);"></div>
<div style="left:1343px;top:179px;width:1px;height:63px;background:rgba(0,0,0,0.13);"></div>
<div style="left:1383px;top:179px;width:1px;height:63px;background:rgba(0,0,0,0.13);"></div>
<div style="left:1423px;top:179px;width:1px;height:63px;background:rgba(0,0,0,0.13);"></div>
<div style="left:1463px;top:179px;width:1px;height:63px;background:rgba(0,0,0,0.13);"></div>
<div style="left:1503px;top:179px;width:1px;height:63px;background:rgba(0,0,0,0.13);"></div>
<div style="left:1543px;top:179px;width:1px;height:63px;background:rgba(0,0,0,0.13);"></div>
<div style="left:1583px;top:179px;width:1px;height:63px;background:rgba(0,0,0,0.13);"></div>
<div style="left:1623px;top:179px;width:1px;height:63px;background:rgba(0,0,0,0.13);"></div>
<div style="left:1663px;top:179px;width:1px;height:63px;background:rgba(0,0,0,0.13);"></div>
<div style="left:13px;top:245px;width:209px;height:25px;background:#353535;"></div>
<div style="left:222px;top:245px;width:320px;height:25px;background:#313131;"></div>
<div style="left:542px;top:245px;width:320px;height:25px;background:#353535;"></div>
<div style="left:862px;top:245px;width:320px;height:25px;background:#313131;"></div>
<div style="left:1182px;top:245px;width:320px;height:25px;background:#353535;"></div>
<div style="left:1502px;top:245px;width:213px;height:25px;background:#313131;"></div>
<div style="left:22px;top:245px;width:1px;height:25px;background:rgba(0,0,0,0.13);"></div>
<div style="left:62px;top:245px;width:1px;height:25px;background:rgba(0,0,0,0.13);"></div>
<div style="left:102px;top:245px;width:1px;height:25px;background:rgba(0,0,0,0.13);"></div>
<div style="left:142px;top:245px;width:1px;height:25px;background:rgba(0,0,0,0.13);"></div>
<div style="left:182px;top:245px;width:1px;height:25px;background:rgba(0,0,0,0.13);"></div>
<div style="left:222px;top:245px;width:1px;height:25px;background:rgba(0,0,0,0.13);"></div>
<div style="left:262px;top:245px;width:1px;height:25px;background:rgba(0,0,0,0.13);"></div>
<div style="left:302px;top:245px;width:1px;height:25px;background:rgba(0,0,0,0.13);"></div>
<div style="left:342px;top:245px;width:1px;height:25px;background:rgba(0,0,0,0.13);"></div>
<div style="left:382px;top:245px;width:1px;height:25px;background:rgba(0,0,0,0.13);"></div>
<div style="left:422px;top:245px;width:1px;height:25px;background:rgba(0,0,0,0.13);"></div>
<div style="left:462px;top:245px;width:1px;height:25px;background:rgba(0,0,0,0.13);"></div>
<div style="left:502px;top:245px;width:1px;height:25px;background:rgba(0,0,0,0.13);"></div>
<div style="left:542px;top:245px;width:1px;height:25px;background:rgba(0,0,0,0.13);"></div>
<div style="left:582px;top:245px;width:1px;height:25px;background:rgba(0,0,0,0.13);"></div>
<div style="left:622px;top:245px;width:1px;height:25px;background:rgba(0,0,0,0.13);"></div>
<div style="left:662px;top:245px;width:1px;height:25px;background:rgba(0,0,0,0.13);"></div>
<div style="left:702px;top:245px;width:1px;height:25px;background:rgba(0,0,0,0.13);"></div>
<div style="left:742px;top:245px;width:1px;height:25px;background:rgba(0,0,0,0.13);"></div>
<div style="left:782px;top:245px;width:1px;height:25px;background:rgba(0,0,0,0.13);"></div>
<div style="left:822px;top:245px;width:1px;height:25px;background:rgba(0,0,0,0.13);"></div>
<div style="left:862px;top:245px;width:1px;height:25px;background:rgba(0,0,0,0.13);"></div>
<div style="left:902px;top:245px;width:1px;height:25px;background:rgba(0,0,0,0.13);"></div>
<div style="left:942px;top:245px;width:1px;height:25px;background:rgba(0,0,0,0.13);"></div>
<div style="left:983px;top:245px;width:1px;height:25px;background:rgba(0,0,0,0.13);"></div>
<div style="left:1023px;top:245px;width:1px;height:25px;background:rgba(0,0,0,0.13);"></div>
<div style="left:1063px;top:245px;width:1px;height:25px;background:rgba(0,0,0,0.13);"></div>
<div style="left:1103px;top:245px;width:1px;height:25px;background:rgba(0,0,0,0.13);"></div>
<div style="left:1143px;top:245px;width:1px;height:25px;background:rgba(0,0,0,0.13);"></div>
<div style="left:1183px;top:245px;width:1px;height:25px;background:rgba(0,0,0,0.13);"></div>
<div style="left:1223px;top:245px;width:1px;height:25px;background:rgba(0,0,0,0.13);"></div>
<div style="left:1263px;top:245px;width:1px;height:25px;background:rgba(0,0,0,0.13);"></div>
<div style="left:1303px;top:245px;width:1px;height:25px;background:rgba(0,0,0,0.13);"></div>
<div style="left:1343px;top:245px;width:1px;height:25px;background:rgba(0,0,0,0.13);"></div>
<div style="left:1383px;top:245px;width:1px;height:25px;background:rgba(0,0,0,0.13);"></div>
<div style="left:1423px;top:245px;width:1px;height:25px;background:rgba(0,0,0,0.13);"></div>
<div style="left:1463px;top:245px;width:1px;height:25px;background:rgba(0,0,0,0.13);"></div>
<div style="left:1503px;top:245px;width:1px;height:25px;background:rgba(0,0,0,0.13);"></div>
<div style="left:1543px;top:245px;width:1px;height:25px;background:rgba(0,0,0,0.13);"></div>
<div style="left:1583px;top:245px;width:1px;height:25px;background:rgba(0,0,0,0.13);"></div>
<div style="left:1623px;top:245px;width:1px;height:25px;background:rgba(0,0,0,0.13);"></div>
<div style="left:1663px;top:245px;width:1px;height:25px;background:rgba(0,0,0,0.13);"></div>
<div style="left:13px;top:272px;width:209px;height:24px;background:#353535;"></div>
<div style="left:222px;top:272px;width:320px;height:24px;background:#313131;"></div>
<div style="left:542px;top:272px;width:320px;height:24px;background:#353535;"></div>
<div style="left:862px;top:272px;width:320px;height:24px;background:#313131;"></div>
<div style="left:1182px;top:272px;width:320px;height:24px;background:#353535;"></div>
<div style="left:1502px;top:272px;width:213px;height:24px;background:#313131;"></div>
<div style="left:22px;top:272px;width:1px;height:24px;background:rgba(0,0,0,0.13);"></div>
<div style="left:62px;top:272px;width:1px;height:24px;background:rgba(0,0,0,0.13);"></div>
<div style="left:102px;top:272px;width:1px;height:24px;background:rgba(0,0,0,0.13);"></div>
<div style="left:142px;top:272px;width:1px;height:24px;background:rgba(0,0,0,0.13);"></div>
<div style="left:182px;top:272px;width:1px;height:24px;background:rgba(0,0,0,0.13);"></div>
<div style="left:222px;top:272px;width:1px;height:24px;background:rgba(0,0,0,0.13);"></div>
<div style="left:262px;top:272px;width:1px;height:24px;background:rgba(0,0,0,0.13);"></div>
<div style="left:302px;top:272px;width:1px;height:24px;background:rgba(0,0,0,0.13);"></div>
<div style="left:342px;top:272px;width:1px;height:24px;background:rgba(0,0,0,0.13);"></div>
<div style="left:382px;top:272px;width:1px;height:24px;background:rgba(0,0,0,0.13);"></div>
<div style="left:422px;top:272px;width:1px;height:24px;background:rgba(0,0,0,0.13);"></div>
<div style="left:462px;top:272px;width:1px;height:24px;background:rgba(0,0,0,0.13);"></div>
<div style="left:502px;top:272px;width:1px;height:24px;background:rgba(0,0,0,0.13);"></div>
<div style="left:542px;top:272px;width:1px;height:24px;background:rgba(0,0,0,0.13);"></div>
<div style="left:582px;top:272px;width:1px;height:24px;background:rgba(0,0,0,0.13);"></div>
<div style="left:622px;top:272px;width:1px;height:24px;background:rgba(0,0,0,0.13);"></div>
<div style="left:662px;top:272px;width:1px;height:24px;background:rgba(0,0,0,0.13);"></div>
<div style="left:702px;top:272px;width:1px;height:24px;background:rgba(0,0,0,0.13);"></div>
<div style="left:742px;top:272px;width:1px;height:24px;background:rgba(0,0,0,0.13);"></div>
<div style="left:782px;top:272px;width:1px;height:24px;background:rgba(0,0,0,0.13);"></div>
<div style="left:822px;top:272px;width:1px;height:24px;background:rgba(0,0,0,0.13);"></div>
<div style="left:862px;top:272px;width:1px;height:24px;background:rgba(0,0,0,0.13);"></div>
<div style="left:902px;top:272px;width:1px;height:24px;background:rgba(0,0,0,0.13);"></div>
<div style="left:942px;top:272px;width:1px;height:24px;background:rgba(0,0,0,0.13);"></div>
<div style="left:983px;top:272px;width:1px;height:24px;background:rgba(0,0,0,0.13);"></div>
<div style="left:1023px;top:272px;width:1px;height:24px;background:rgba(0,0,0,0.13);"></div>
<div style="left:1063px;top:272px;width:1px;height:24px;background:rgba(0,0,0,0.13);"></div>
<div style="left:1103px;top:272px;width:1px;height:24px;background:rgba(0,0,0,0.13);"></div>
<div style="left:1143px;top:272px;width:1px;height:24px;background:rgba(0,0,0,0.13);"></div>
<div style="left:1183px;top:272px;width:1px;height:24px;background:rgba(0,0,0,0.13);"></div>
<div style="left:1223px;top:272px;width:1px;height:24px;background:rgba(0,0,0,0.13);"></div>
<div style="left:1263px;top:272px;width:1px;height:24px;background:rgba(0,0,0,0.13);"></div>
<div style="left:1303px;top:272px;width:1px;height:24px;background:rgba(0,0,0,0.13);"></div>
<div style="left:1343px;top:272px;width:1px;height:24px;background:rgba(0,0,0,0.13);"></div>
<div style="left:1383px;top:272px;width:1px;height:24px;background:rgba(0,0,0,0.13);"></div>
<div style="left:1423px;top:272px;width:1px;height:24px;background:rgba(0,0,0,0.13);"></div>
<div style="left:1463px;top:272px;width:1px;height:24px;background:rgba(0,0,0,0.13);"></div>
<div style="left:1503px;top:272px;width:1px;height:24px;background:rgba(0,0,0,0.13);"></div>
<div style="left:1543px;top:272px;width:1px;height:24px;background:rgba(0,0,0,0.13);"></div>
<div style="left:1583px;top:272px;width:1px;height:24px;background:rgba(0,0,0,0.13);"></div>
<div style="left:1623px;top:272px;width:1px;height:24px;background:rgba(0,0,0,0.13);"></div>
<div style="left:1663px;top:272px;width:1px;height:24px;background:rgba(0,0,0,0.13);"></div>
<div style="left:13px;top:298px;width:209px;height:122px;background:#444444;"></div>
<div style="left:222px;top:298px;width:320px;height:122px;background:#3d3d3d;"></div>
<div style="left:542px;top:298px;width:320px;height:122px;background:#444444;"></div>
<div style="left:862px;top:298px;width:320px;height:122px;background:#3d3d3d;"></div>
<div style="left:1182px;top:298px;width:320px;height:122px;background:#444444;"></div>
<div style="left:1502px;top:298px;width:213px;height:122px;background:#3d3d3d;"></div>
<div style="left:22px;top:298px;width:1px;height:122px;background:rgba(0,0,0,0.10);"></div>
<div style="left:62px;top:298px;width:1px;height:122px;background:rgba(0,0,0,0.10);"></div>
<div style="left:102px;top:298px;width:1px;height:122px;background:rgba(0,0,0,0.10);"></div>
<div style="left:142px;top:298px;width:1px;height:122px;background:rgba(0,0,0,0.10);"></div>
<div style="left:182px;top:298px;width:1px;height:122px;background:rgba(0,0,0,0.10);"></div>
<div style="left:222px;top:298px;width:1px;height:122px;background:rgba(0,0,0,0.10);"></div>
<div style="left:262px;top:298px;width:1px;height:122px;background:rgba(0,0,0,0.10);"></div>
<div style="left:302px;top:298px;width:1px;height:122px;background:rgba(0,0,0,0.10);"></div>
<div style="left:342px;top:298px;width:1px;height:122px;background:rgba(0,0,0,0.10);"></div>
<div style="left:382px;top:298px;width:1px;height:122px;background:rgba(0,0,0,0.10);"></div>
<div style="left:422px;top:298px;width:1px;height:122px;background:rgba(0,0,0,0.10);"></div>
<div style="left:462px;top:298px;width:1px;height:122px;background:rgba(0,0,0,0.10);"></div>
<div style="left:502px;top:298px;width:1px;height:122px;background:rgba(0,0,0,0.10);"></div>
<div style="left:542px;top:298px;width:1px;height:122px;background:rgba(0,0,0,0.10);"></div>
<div style="left:582px;top:298px;width:1px;height:122px;background:rgba(0,0,0,0.10);"></div>
<div style="left:622px;top:298px;width:1px;height:122px;background:rgba(0,0,0,0.10);"></div>
<div style="left:662px;top:298px;width:1px;height:122px;background:rgba(0,0,0,0.10);"></div>
<div style="left:702px;top:298px;width:1px;height:122px;background:rgba(0,0,0,0.10);"></div>
<div style="left:742px;top:298px;width:1px;height:122px;background:rgba(0,0,0,0.10);"></div>
<div style="left:782px;top:298px;width:1px;height:122px;background:rgba(0,0,0,0.10);"></div>
<div style="left:822px;top:298px;width:1px;height:122px;background:rgba(0,0,0,0.10);"></div>
<div style="left:862px;top:298px;width:1px;height:122px;background:rgba(0,0,0,0.10);"></div>
<div style="left:902px;top:298px;width:1px;height:122px;background:rgba(0,0,0,0.10);"></div>
<div style="left:942px;top:298px;width:1px;height:122px;background:rgba(0,0,0,0.10);"></div>
<div style="left:983px;top:298px;width:1px;height:122px;background:rgba(0,0,0,0.10);"></div>
<div style="left:1023px;top:298px;width:1px;height:122px;background:rgba(0,0,0,0.10);"></div>
<div style="left:1063px;top:298px;width:1px;height:122px;background:rgba(0,0,0,0.10);"></div>
<div style="left:1103px;top:298px;width:1px;height:122px;background:rgba(0,0,0,0.10);"></div>
<div style="left:1143px;top:298px;width:1px;height:122px;background:rgba(0,0,0,0.10);"></div>
<div style="left:1183px;top:298px;width:1px;height:122px;background:rgba(0,0,0,0.10);"></div>
<div style="left:1223px;top:298px;width:1px;height:122px;background:rgba(0,0,0,0.10);"></div>
<div style="left:1263px;top:298px;width:1px;height:122px;background:rgba(0,0,0,0.10);"></div>
<div style="left:1303px;top:298px;width:1px;height:122px;background:rgba(0,0,0,0.10);"></div>
<div style="left:1343px;top:298px;width:1px;height:122px;background:rgba(0,0,0,0.10);"></div>
<div style="left:1383px;top:298px;width:1px;height:122px;background:rgba(0,0,0,0.10);"></div>
<div style="left:1423px;top:298px;width:1px;height:122px;background:rgba(0,0,0,0.10);"></div>
<div style="left:1463px;top:298px;width:1px;height:122px;background:rgba(0,0,0,0.10);"></div>
<div style="left:1503px;top:298px;width:1px;height:122px;background:rgba(0,0,0,0.10);"></div>
<div style="left:1543px;top:298px;width:1px;height:122px;background:rgba(0,0,0,0.10);"></div>
<div style="left:1583px;top:298px;width:1px;height:122px;background:rgba(0,0,0,0.10);"></div>
<div style="left:1623px;top:298px;width:1px;height:122px;background:rgba(0,0,0,0.10);"></div>
<div style="left:1663px;top:298px;width:1px;height:122px;background:rgba(0,0,0,0.10);"></div>
<div style="left:13px;top:424px;width:209px;height:24px;background:#353535;"></div>
<div style="left:222px;top:424px;width:320px;height:24px;background:#313131;"></div>
<div style="left:542px;top:424px;width:320px;height:24px;background:#353535;"></div>
<div style="left:862px;top:424px;width:320px;height:24px;background:#313131;"></div>
<div style="left:1182px;top:424px;width:320px;height:24px;background:#353535;"></div>
<div style="left:1502px;top:424px;width:213px;height:24px;background:#313131;"></div>
<div style="left:22px;top:424px;width:1px;height:24px;background:rgba(0,0,0,0.13);"></div>
<div style="left:62px;top:424px;width:1px;height:24px;background:rgba(0,0,0,0.13);"></div>
<div style="left:102px;top:424px;width:1px;height:24px;background:rgba(0,0,0,0.13);"></div>
<div style="left:142px;top:424px;width:1px;height:24px;background:rgba(0,0,0,0.13);"></div>
<div style="left:182px;top:424px;width:1px;height:24px;background:rgba(0,0,0,0.13);"></div>
<div style="left:222px;top:424px;width:1px;height:24px;background:rgba(0,0,0,0.13);"></div>
<div style="left:262px;top:424px;width:1px;height:24px;background:rgba(0,0,0,0.13);"></div>
<div style="left:302px;top:424px;width:1px;height:24px;background:rgba(0,0,0,0.13);"></div>
<div style="left:342px;top:424px;width:1px;height:24px;background:rgba(0,0,0,0.13);"></div>
<div style="left:382px;top:424px;width:1px;height:24px;background:rgba(0,0,0,0.13);"></div>
<div style="left:422px;top:424px;width:1px;height:24px;background:rgba(0,0,0,0.13);"></div>
<div style="left:462px;top:424px;width:1px;height:24px;background:rgba(0,0,0,0.13);"></div>
<div style="left:502px;top:424px;width:1px;height:24px;background:rgba(0,0,0,0.13);"></div>
<div style="left:542px;top:424px;width:1px;height:24px;background:rgba(0,0,0,0.13);"></div>
<div style="left:582px;top:424px;width:1px;height:24px;background:rgba(0,0,0,0.13);"></div>
<div style="left:622px;top:424px;width:1px;height:24px;background:rgba(0,0,0,0.13);"></div>
<div style="left:662px;top:424px;width:1px;height:24px;background:rgba(0,0,0,0.13);"></div>
<div style="left:702px;top:424px;width:1px;height:24px;background:rgba(0,0,0,0.13);"></div>
<div style="left:742px;top:424px;width:1px;height:24px;background:rgba(0,0,0,0.13);"></div>
<div style="left:782px;top:424px;width:1px;height:24px;background:rgba(0,0,0,0.13);"></div>
<div style="left:822px;top:424px;width:1px;height:24px;background:rgba(0,0,0,0.13);"></div>
<div style="left:862px;top:424px;width:1px;height:24px;background:rgba(0,0,0,0.13);"></div>
<div style="left:902px;top:424px;width:1px;height:24px;background:rgba(0,0,0,0.13);"></div>
<div style="left:942px;top:424px;width:1px;height:24px;background:rgba(0,0,0,0.13);"></div>
<div style="left:983px;top:424px;width:1px;height:24px;background:rgba(0,0,0,0.13);"></div>
<div style="left:1023px;top:424px;width:1px;height:24px;background:rgba(0,0,0,0.13);"></div>
<div style="left:1063px;top:424px;width:1px;height:24px;background:rgba(0,0,0,0.13);"></div>
<div style="left:1103px;top:424px;width:1px;height:24px;background:rgba(0,0,0,0.13);"></div>
<div style="left:1143px;top:424px;width:1px;height:24px;background:rgba(0,0,0,0.13);"></div>
<div style="left:1183px;top:424px;width:1px;height:24px;background:rgba(0,0,0,0.13);"></div>
<div style="left:1223px;top:424px;width:1px;height:24px;background:rgba(0,0,0,0.13);"></div>
<div style="left:1263px;top:424px;width:1px;height:24px;background:rgba(0,0,0,0.13);"></div>
<div style="left:1303px;top:424px;width:1px;height:24px;background:rgba(0,0,0,0.13);"></div>
<div style="left:1343px;top:424px;width:1px;height:24px;background:rgba(0,0,0,0.13);"></div>
<div style="left:1383px;top:424px;width:1px;height:24px;background:rgba(0,0,0,0.13);"></div>
<div style="left:1423px;top:424px;width:1px;height:24px;background:rgba(0,0,0,0.13);"></div>
<div style="left:1463px;top:424px;width:1px;height:24px;background:rgba(0,0,0,0.13);"></div>
<div style="left:1503px;top:424px;width:1px;height:24px;background:rgba(0,0,0,0.13);"></div>
<div style="left:1543px;top:424px;width:1px;height:24px;background:rgba(0,0,0,0.13);"></div>
<div style="left:1583px;top:424px;width:1px;height:24px;background:rgba(0,0,0,0.13);"></div>
<div style="left:1623px;top:424px;width:1px;height:24px;background:rgba(0,0,0,0.13);"></div>
<div style="left:1663px;top:424px;width:1px;height:24px;background:rgba(0,0,0,0.13);"></div>
<div style="left:222px;top:179px;width:1281px;height:63px;background:#62ffe8;"></div>
<div style="left:262px;top:179px;width:1px;height:63px;background:#52dcc8;"></div>
<div style="left:302px;top:179px;width:1px;height:63px;background:#52dcc8;"></div>
<div style="left:342px;top:179px;width:1px;height:63px;background:#52dcc8;"></div>
<div style="left:382px;top:179px;width:1px;height:63px;background:#52dcc8;"></div>
<div style="left:422px;top:179px;width:1px;height:63px;background:#52dcc8;"></div>
<div style="left:462px;top:179px;width:1px;height:63px;background:#52dcc8;"></div>
<div style="left:502px;top:179px;width:1px;height:63px;background:#52dcc8;"></div>
<div style="left:542px;top:179px;width:1px;height:63px;background:#52dcc8;"></div>
<div style="left:582px;top:179px;width:1px;height:63px;background:#52dcc8;"></div>
<div style="left:622px;top:179px;width:1px;height:63px;background:#52dcc8;"></div>
<div style="left:662px;top:179px;width:1px;height:63px;background:#52dcc8;"></div>
<div style="left:702px;top:179px;width:1px;height:63px;background:#52dcc8;"></div>
<div style="left:742px;top:179px;width:1px;height:63px;background:#52dcc8;"></div>
<div style="left:782px;top:179px;width:1px;height:63px;background:#52dcc8;"></div>
<div style="left:822px;top:179px;width:1px;height:63px;background:#52dcc8;"></div>
<div style="left:862px;top:179px;width:1px;height:63px;background:#52dcc8;"></div>
<div style="left:902px;top:179px;width:1px;height:63px;background:#52dcc8;"></div>
<div style="left:942px;top:179px;width:1px;height:63px;background:#52dcc8;"></div>
<div style="left:982px;top:179px;width:1px;height:63px;background:#52dcc8;"></div>
<div style="left:1022px;top:179px;width:1px;height:63px;background:#52dcc8;"></div>
<div style="left:1062px;top:179px;width:1px;height:63px;background:#52dcc8;"></div>
<div style="left:1102px;top:179px;width:1px;height:63px;background:#52dcc8;"></div>
<div style="left:1142px;top:179px;width:1px;height:63px;background:#52dcc8;"></div>
<div style="left:1182px;top:179px;width:1px;height:63px;background:#52dcc8;"></div>
<div style="left:1222px;top:179px;width:1px;height:63px;background:#52dcc8;"></div>
<div style="left:1262px;top:179px;width:1px;height:63px;background:#52dcc8;"></div>
<div style="left:1302px;top:179px;width:1px;height:63px;background:#52dcc8;"></div>
<div style="left:1342px;top:179px;width:1px;height:63px;background:#52dcc8;"></div>
<div style="left:1382px;top:179px;width:1px;height:63px;background:#52dcc8;"></div>
<div style="left:1422px;top:179px;width:1px;height:63px;background:#52dcc8;"></div>
<div style="left:1462px;top:179px;width:1px;height:63px;background:#52dcc8;"></div>
<div style="left:362px;top:219px;width:20px;height:4px;background:#1c1c1c;"></div>
<div style="left:442px;top:219px;width:20px;height:4px;background:#1c1c1c;"></div>
<div style="left:522px;top:219px;width:20px;height:4px;background:#1c1c1c;"></div>
<div style="left:602px;top:219px;width:20px;height:4px;background:#1c1c1c;"></div>
<div style="left:682px;top:219px;width:20px;height:4px;background:#1c1c1c;"></div>
<div style="left:762px;top:219px;width:20px;height:4px;background:#1c1c1c;"></div>
<div style="left:842px;top:219px;width:20px;height:4px;background:#1c1c1c;"></div>
<div style="left:922px;top:219px;width:20px;height:4px;background:#1c1c1c;"></div>
<div style="left:1003px;top:219px;width:20px;height:4px;background:#1c1c1c;"></div>
<div style="left:1083px;top:219px;width:20px;height:4px;background:#1c1c1c;"></div>
<div style="left:1163px;top:219px;width:20px;height:4px;background:#1c1c1c;"></div>
<div style="left:1243px;top:219px;width:20px;height:4px;background:#1c1c1c;"></div>
<div style="left:1323px;top:219px;width:20px;height:4px;background:#1c1c1c;"></div>
<div style="left:1403px;top:219px;width:20px;height:4px;background:#1c1c1c;"></div>
<div style="left:1483px;top:219px;width:20px;height:4px;background:#1c1c1c;"></div>
<div style="left:302px;top:236px;width:20px;height:4px;background:#1c1c1c;"></div>
<div style="left:412px;top:236px;width:20px;height:4px;background:#1c1c1c;"></div>
<div style="left:462px;top:236px;width:20px;height:4px;background:#1c1c1c;"></div>
<div style="left:572px;top:236px;width:20px;height:4px;background:#1c1c1c;"></div>
<div style="left:622px;top:236px;width:20px;height:4px;background:#1c1c1c;"></div>
<div style="left:732px;top:236px;width:20px;height:4px;background:#1c1c1c;"></div>
<div style="left:782px;top:236px;width:20px;height:4px;background:#1c1c1c;"></div>
<div style="left:892px;top:236px;width:20px;height:4px;background:#1c1c1c;"></div>
<div style="left:942px;top:236px;width:20px;height:4px;background:#1c1c1c;"></div>
<div style="left:1053px;top:236px;width:20px;height:4px;background:#1c1c1c;"></div>
<div style="left:1103px;top:236px;width:20px;height:4px;background:#1c1c1c;"></div>
<div style="left:1213px;top:236px;width:20px;height:4px;background:#1c1c1c;"></div>
<div style="left:1263px;top:236px;width:20px;height:4px;background:#1c1c1c;"></div>
<div style="left:1373px;top:236px;width:20px;height:4px;background:#1c1c1c;"></div>
<div style="left:1423px;top:236px;width:20px;height:4px;background:#1c1c1c;"></div>
<div style="left:782px;top:245px;width:80px;height:23px;background:#62ffe8;"></div>
<div style="left:1422px;top:245px;width:81px;height:23px;background:#62ffe8;"></div>
<div style="left:862px;top:272px;width:641px;height:23px;background:#eefca8;"></div>
<div style="left:862px;top:298px;width:320px;height:24px;background:#f9f27c;"></div>
<div style="left:862px;top:298px;width:160px;height:2px;background:#5b717b;"></div>
<div style="left:862px;top:321px;width:320px;height:1px;background:#a8a250;"></div>
<div style="left:862px;top:322px;width:160px;height:98px;background:#5b717b;"></div>
<div style="left:1022px;top:322px;width:160px;height:98px;background:#f7f07a;"></div>
<div style="left:902px;top:322px;width:1px;height:98px;background:#50656e;"></div>
<div style="left:942px;top:322px;width:1px;height:98px;background:#50656e;"></div>
<div style="left:982px;top:322px;width:1px;height:98px;background:#50656e;"></div>
<div style="left:1062px;top:322px;width:1px;height:98px;background:#d8d26a;"></div>
<div style="left:1102px;top:322px;width:1px;height:98px;background:#d8d26a;"></div>
<div style="left:1142px;top:322px;width:1px;height:98px;background:#d8d26a;"></div>
<div style="left:862px;top:327px;width:160px;height:4px;background:#1c1c1c;"></div>
<div style="left:862px;top:340px;width:160px;height:4px;background:#1c1c1c;"></div>
<div style="left:862px;top:357px;width:160px;height:4px;background:#1c1c1c;"></div>
<div style="left:862px;top:370px;width:160px;height:4px;background:#1c1c1c;"></div>
<div style="left:1022px;top:349px;width:80px;height:3px;background:#1c1c1c;"></div>
<div style="left:1102px;top:336px;width:80px;height:3px;background:#1c1c1c;"></div>
<div style="left:862px;top:143px;width:1px;height:309px;background:#a8a8a8;"></div>
<div style="left:1182px;top:143px;width:1px;height:309px;background:#a8a8a8;"></div>
<div style="left:13px;top:451px;width:1702px;height:30px;background:#363636;border-radius:0 0 0 5px;"></div>
<div style="left:28px;top:451px;width:1px;height:3px;background:#7a7a7a;"></div>
<div style="left:57px;top:451px;width:1px;height:3px;background:#7a7a7a;"></div>
<div style="left:86px;top:451px;width:1px;height:3px;background:#7a7a7a;"></div>
<div style="left:115px;top:452px;width:1px;height:10px;background:#8a8a8a;"></div>
<div style="left:115px;top:461px;width:3px;height:1px;background:#8a8a8a;"></div>
<div style="left:119px;top:447.0px;height:30px;line-height:30px;font-size:15px;color:#a2a2a2;font-weight:400;font-family:'Liberation Sans',sans-serif;white-space:pre;">1:04</div>
<div style="left:145px;top:451px;width:1px;height:3px;background:#7a7a7a;"></div>
<div style="left:174px;top:451px;width:1px;height:3px;background:#7a7a7a;"></div>
<div style="left:203px;top:451px;width:1px;height:3px;background:#7a7a7a;"></div>
<div style="left:232px;top:452px;width:1px;height:10px;background:#8a8a8a;"></div>
<div style="left:232px;top:461px;width:3px;height:1px;background:#8a8a8a;"></div>
<div style="left:236px;top:447.0px;height:30px;line-height:30px;font-size:15px;color:#a2a2a2;font-weight:400;font-family:'Liberation Sans',sans-serif;white-space:pre;">1:06</div>
<div style="left:261px;top:451px;width:1px;height:3px;background:#7a7a7a;"></div>
<div style="left:290px;top:451px;width:1px;height:3px;background:#7a7a7a;"></div>
<div style="left:319px;top:451px;width:1px;height:3px;background:#7a7a7a;"></div>
<div style="left:349px;top:452px;width:1px;height:10px;background:#8a8a8a;"></div>
<div style="left:349px;top:461px;width:3px;height:1px;background:#8a8a8a;"></div>
<div style="left:353px;top:447.0px;height:30px;line-height:30px;font-size:15px;color:#a2a2a2;font-weight:400;font-family:'Liberation Sans',sans-serif;white-space:pre;">1:08</div>
<div style="left:378px;top:451px;width:1px;height:3px;background:#7a7a7a;"></div>
<div style="left:407px;top:451px;width:1px;height:3px;background:#7a7a7a;"></div>
<div style="left:436px;top:451px;width:1px;height:3px;background:#7a7a7a;"></div>
<div style="left:465px;top:452px;width:1px;height:10px;background:#8a8a8a;"></div>
<div style="left:465px;top:461px;width:3px;height:1px;background:#8a8a8a;"></div>
<div style="left:469px;top:447.0px;height:30px;line-height:30px;font-size:15px;color:#a2a2a2;font-weight:400;font-family:'Liberation Sans',sans-serif;white-space:pre;">1:10</div>
<div style="left:494px;top:451px;width:1px;height:3px;background:#7a7a7a;"></div>
<div style="left:524px;top:451px;width:1px;height:3px;background:#7a7a7a;"></div>
<div style="left:553px;top:451px;width:1px;height:3px;background:#7a7a7a;"></div>
<div style="left:582px;top:452px;width:1px;height:10px;background:#8a8a8a;"></div>
<div style="left:582px;top:461px;width:3px;height:1px;background:#8a8a8a;"></div>
<div style="left:586px;top:447.0px;height:30px;line-height:30px;font-size:15px;color:#a2a2a2;font-weight:400;font-family:'Liberation Sans',sans-serif;white-space:pre;">1:12</div>
<div style="left:611px;top:451px;width:1px;height:3px;background:#7a7a7a;"></div>
<div style="left:640px;top:451px;width:1px;height:3px;background:#7a7a7a;"></div>
<div style="left:669px;top:451px;width:1px;height:3px;background:#7a7a7a;"></div>
<div style="left:699px;top:452px;width:1px;height:10px;background:#8a8a8a;"></div>
<div style="left:699px;top:461px;width:3px;height:1px;background:#8a8a8a;"></div>
<div style="left:703px;top:447.0px;height:30px;line-height:30px;font-size:15px;color:#a2a2a2;font-weight:400;font-family:'Liberation Sans',sans-serif;white-space:pre;">1:14</div>
<div style="left:728px;top:451px;width:1px;height:3px;background:#7a7a7a;"></div>
<div style="left:757px;top:451px;width:1px;height:3px;background:#7a7a7a;"></div>
<div style="left:786px;top:451px;width:1px;height:3px;background:#7a7a7a;"></div>
<div style="left:815px;top:452px;width:1px;height:10px;background:#8a8a8a;"></div>
<div style="left:815px;top:461px;width:3px;height:1px;background:#8a8a8a;"></div>
<div style="left:819px;top:447.0px;height:30px;line-height:30px;font-size:15px;color:#a2a2a2;font-weight:400;font-family:'Liberation Sans',sans-serif;white-space:pre;">1:16</div>
<div style="left:844px;top:451px;width:1px;height:3px;background:#7a7a7a;"></div>
<div style="left:874px;top:451px;width:1px;height:3px;background:#7a7a7a;"></div>
<div style="left:903px;top:451px;width:1px;height:3px;background:#7a7a7a;"></div>
<div style="left:932px;top:452px;width:1px;height:10px;background:#8a8a8a;"></div>
<div style="left:932px;top:461px;width:3px;height:1px;background:#8a8a8a;"></div>
<div style="left:936px;top:447.0px;height:30px;line-height:30px;font-size:15px;color:#a2a2a2;font-weight:400;font-family:'Liberation Sans',sans-serif;white-space:pre;">1:18</div>
<div style="left:961px;top:451px;width:1px;height:3px;background:#7a7a7a;"></div>
<div style="left:990px;top:451px;width:1px;height:3px;background:#7a7a7a;"></div>
<div style="left:1019px;top:451px;width:1px;height:3px;background:#7a7a7a;"></div>
<div style="left:1049px;top:452px;width:1px;height:10px;background:#8a8a8a;"></div>
<div style="left:1049px;top:461px;width:3px;height:1px;background:#8a8a8a;"></div>
<div style="left:1053px;top:447.0px;height:30px;line-height:30px;font-size:15px;color:#a2a2a2;font-weight:400;font-family:'Liberation Sans',sans-serif;white-space:pre;">1:20</div>
<div style="left:1078px;top:451px;width:1px;height:3px;background:#7a7a7a;"></div>
<div style="left:1107px;top:451px;width:1px;height:3px;background:#7a7a7a;"></div>
<div style="left:1136px;top:451px;width:1px;height:3px;background:#7a7a7a;"></div>
<div style="left:1165px;top:452px;width:1px;height:10px;background:#8a8a8a;"></div>
<div style="left:1165px;top:461px;width:3px;height:1px;background:#8a8a8a;"></div>
<div style="left:1169px;top:447.0px;height:30px;line-height:30px;font-size:15px;color:#a2a2a2;font-weight:400;font-family:'Liberation Sans',sans-serif;white-space:pre;">1:22</div>
<div style="left:1194px;top:451px;width:1px;height:3px;background:#7a7a7a;"></div>
<div style="left:1224px;top:451px;width:1px;height:3px;background:#7a7a7a;"></div>
<div style="left:1253px;top:451px;width:1px;height:3px;background:#7a7a7a;"></div>
<div style="left:1282px;top:452px;width:1px;height:10px;background:#8a8a8a;"></div>
<div style="left:1282px;top:461px;width:3px;height:1px;background:#8a8a8a;"></div>
<div style="left:1286px;top:447.0px;height:30px;line-height:30px;font-size:15px;color:#a2a2a2;font-weight:400;font-family:'Liberation Sans',sans-serif;white-space:pre;">1:24</div>
<div style="left:1311px;top:451px;width:1px;height:3px;background:#7a7a7a;"></div>
<div style="left:1340px;top:451px;width:1px;height:3px;background:#7a7a7a;"></div>
<div style="left:1369px;top:451px;width:1px;height:3px;background:#7a7a7a;"></div>
<div style="left:1399px;top:452px;width:1px;height:10px;background:#8a8a8a;"></div>
<div style="left:1399px;top:461px;width:3px;height:1px;background:#8a8a8a;"></div>
<div style="left:1403px;top:447.0px;height:30px;line-height:30px;font-size:15px;color:#a2a2a2;font-weight:400;font-family:'Liberation Sans',sans-serif;white-space:pre;">1:26</div>
<div style="left:1428px;top:451px;width:1px;height:3px;background:#7a7a7a;"></div>
<div style="left:1457px;top:451px;width:1px;height:3px;background:#7a7a7a;"></div>
<div style="left:1486px;top:451px;width:1px;height:3px;background:#7a7a7a;"></div>
<div style="left:1515px;top:452px;width:1px;height:10px;background:#8a8a8a;"></div>
<div style="left:1515px;top:461px;width:3px;height:1px;background:#8a8a8a;"></div>
<div style="left:1519px;top:447.0px;height:30px;line-height:30px;font-size:15px;color:#a2a2a2;font-weight:400;font-family:'Liberation Sans',sans-serif;white-space:pre;">1:28</div>
<div style="left:1544px;top:451px;width:1px;height:3px;background:#7a7a7a;"></div>
<div style="left:1574px;top:451px;width:1px;height:3px;background:#7a7a7a;"></div>
<div style="left:1603px;top:451px;width:1px;height:3px;background:#7a7a7a;"></div>
<div style="left:1632px;top:452px;width:1px;height:10px;background:#8a8a8a;"></div>
<div style="left:1632px;top:461px;width:3px;height:1px;background:#8a8a8a;"></div>
<div style="left:1636px;top:447.0px;height:30px;line-height:30px;font-size:15px;color:#a2a2a2;font-weight:400;font-family:'Liberation Sans',sans-serif;white-space:pre;">1:30</div>
<div style="left:1661px;top:451px;width:1px;height:3px;background:#7a7a7a;"></div>
<div style="left:1690px;top:451px;width:1px;height:3px;background:#7a7a7a;"></div>
<svg style="left:857px;top:452px;" width="8" height="6" viewBox="0 0 8 6"><polygon points="1,5 6,0 6,5" fill="#9fd8f0"/></svg>
<svg style="left:1020px;top:452px;" width="8" height="6" viewBox="0 0 8 6"><polygon points="1,0 6,5 1,5" fill="#9fd8f0"/></svg>
<div style="left:710px;width:1000px;text-align:right;top:412.0px;height:48px;line-height:48px;font-size:24px;color:#7a7a7a;font-weight:700;font-family:'Liberation Sans',sans-serif;white-space:pre;-webkit-text-stroke-width:0;letter-spacing:1.5px;">1/2</div>
<div style="left:1715px;top:112px;width:320px;height:64px;background:#363636;"></div>
<div style="left:1720px;top:127px;width:41px;height:18px;background:#1f1f1f;border-radius:9px;"></div>
<div style="left:1240.5px;width:1000px;text-align:center;top:121.0px;height:30px;line-height:30px;font-size:15px;color:#d8d8d8;font-weight:400;font-family:'Liberation Sans',sans-serif;white-space:pre;">Set</div>
<div style="left:1776px;top:127px;width:33px;height:18px;background:#1f1f1f;"></div>
<div style="left:1815px;top:127px;width:32px;height:18px;background:#1f1f1f;"></div>
<svg style="left:1776px;top:127px;" width="33" height="18" viewBox="0 0 33 18"><line x1="13" y1="12.5" x2="20" y2="5.5" stroke="#d0d0d0" stroke-width="1.6"/><circle cx="12.5" cy="13" r="2" fill="#d0d0d0"/><circle cx="20.5" cy="5" r="2" fill="#d0d0d0"/></svg>
<svg style="left:1815px;top:127px;" width="32" height="18" viewBox="0 0 32 18"><rect x="10.5" y="8" width="11" height="7" fill="#d0d0d0"/><path d="M12.5,8.5 V6.5 Q12.5,3.5 16,3.5 Q19.5,3.5 19.5,6.5 V8.5" fill="none" stroke="#d0d0d0" stroke-width="1.6"/></svg>
<div style="left:1719.0px;top:152px;width:19.0px;height:19px;background:#1f1f1f;border-radius:50%;"></div>
<div style="left:1741.5px;top:152px;width:19.0px;height:19px;background:#1f1f1f;border-radius:50%;"></div>
<svg style="left:1719px;top:152px;" width="19" height="19" viewBox="0 0 19 19"><line x1="5" y1="9.5" x2="14" y2="9.5" stroke="#d0d0d0" stroke-width="1.8"/><polygon points="4,9.5 9,5 9,14" fill="#d0d0d0"/></svg>
<svg style="left:1742px;top:152px;" width="19" height="19" viewBox="0 0 19 19"><line x1="5" y1="9.5" x2="14" y2="9.5" stroke="#d0d0d0" stroke-width="1.8"/><polygon points="15,9.5 10,5 10,14" fill="#d0d0d0"/></svg>
<div style="left:1863px;top:179px;width:5px;height:293px;background:#363636;"></div>
<div style="left:1863px;top:179px;width:172px;height:63px;background:#363636;"></div>
<div style="left:1863px;top:245px;width:172px;height:25px;background:#363636;"></div>
<div style="left:1863px;top:272px;width:172px;height:24px;background:#363636;"></div>
<div style="left:1863px;top:298px;width:172px;height:122px;background:#444444;"></div>
<div style="left:1863px;top:424px;width:172px;height:24px;background:#363636;"></div>
<div style="left:1715px;top:179px;width:1px;height:269px;background:#262626;"></div>
<div style="left:1716px;top:179px;width:147px;height:63px;background:#62ffe8;"></div>
<div style="left:1716px;top:245px;width:147px;height:24px;background:#62ffe8;"></div>
<svg style="left:1720px;top:247px;" width="20" height="20" viewBox="0 0 20 20"><circle cx="10" cy="10" r="8.3" fill="none" stroke="#1f4843" stroke-width="1.5"/><polygon points="7.5,5.5 14,10 7.5,14.5" fill="#1f4843"/></svg>
<div style="left:1750px;top:243.0px;height:28px;line-height:28px;font-size:14px;color:#1f4843;font-weight:700;font-family:'Liberation Sans',sans-serif;white-space:pre;-webkit-text-stroke-width:0;letter-spacing:0.2px;">Bass Drop</div>
<div style="left:1716px;top:272px;width:147px;height:23px;background:#eefca8;"></div>
<svg style="left:1720px;top:273px;" width="20" height="20" viewBox="0 0 20 20"><circle cx="10" cy="10" r="8.3" fill="none" stroke="#3c4024" stroke-width="1.5"/><polygon points="7.5,5.5 14,10 7.5,14.5" fill="#3c4024"/></svg>
<div style="left:1750px;top:269.5px;height:28px;line-height:28px;font-size:14px;color:#3c4024;font-weight:700;font-family:'Liberation Sans',sans-serif;white-space:pre;-webkit-text-stroke-width:0;letter-spacing:0.2px;">Synth Riser</div>
<div style="left:1716px;top:298px;width:147px;height:122px;background:#f9f27c;"></div>
<svg style="left:1720px;top:300px;" width="20" height="20" viewBox="0 0 20 20"><circle cx="10" cy="10" r="8.3" fill="none" stroke="#403d1c" stroke-width="1.5"/><polygon points="5.5,7.5 14.5,7.5 10,14" fill="#403d1c"/></svg>
<div style="left:1750px;top:296.5px;height:28px;line-height:28px;font-size:14px;color:#403d1c;font-weight:700;font-family:'Liberation Sans',sans-serif;white-space:pre;-webkit-text-stroke-width:0;letter-spacing:0.2px;">Keys</div>
<div style="left:1716px;top:424px;width:147px;height:24px;background:#ffffff;"></div>
<svg style="left:1720px;top:426px;" width="20" height="20" viewBox="0 0 20 20"><circle cx="10" cy="10" r="8.3" fill="none" stroke="#333333" stroke-width="1.5"/><polygon points="7.5,5.5 14,10 7.5,14.5" fill="#333333"/></svg>
<div style="left:1753px;top:422.0px;height:28px;line-height:28px;font-size:14px;color:#333333;font-weight:700;font-family:'Liberation Sans',sans-serif;white-space:pre;-webkit-text-stroke-width:0;letter-spacing:0.2px;">Main</div>
<div style="left:1869px;top:179px;width:65px;height:9px;background:#1f1f1f;"></div>
<div style="left:1870px;top:179px;width:43px;height:8px;background:#00788a;"></div>
<div style="left:1940px;top:179px;width:65px;height:9px;background:#1f1f1f;"></div>
<div style="left:1869px;top:179px;width:136px;height:9px;overflow:hidden;"><div style="position:absolute;left:0;top:-7px;width:65px;height:18px;line-height:18px;text-align:center;font-size:15px;color:#9ad0dc;-webkit-text-stroke-width:0.3px;">-7.7</div><div style="position:absolute;left:71px;top:-7px;width:65px;height:18px;line-height:18px;text-align:center;font-size:15px;color:#d0d0d0;-webkit-text-stroke-width:0.3px;">C</div></div>
<div style="left:1863px;top:176px;width:172px;height:3px;background:#262626;"></div>
<div style="left:1869px;top:195px;width:42px;height:18px;background:#1f1f1f;"></div>
<div style="left:1916px;top:195px;width:42px;height:18px;background:#1f1f1f;"></div>
<div style="left:1390px;width:1000px;text-align:center;top:186.5px;height:34px;line-height:34px;font-size:17px;color:#c4c4c4;font-weight:400;font-family:'Liberation Sans',sans-serif;white-space:pre;-webkit-text-stroke-width:0.6px;">−∞</div>
<div style="left:1437px;width:1000px;text-align:center;top:186.5px;height:34px;line-height:34px;font-size:17px;color:#c4c4c4;font-weight:400;font-family:'Liberation Sans',sans-serif;white-space:pre;-webkit-text-stroke-width:0.6px;">−∞</div>
<div style="left:2011px;top:179px;width:4px;height:61px;background:#1e1e1e;"></div>
<div style="left:2017px;top:179px;width:4px;height:61px;background:#1e1e1e;"></div>
<div style="left:1869px;top:248px;width:65px;height:18px;background:#1f1f1f;"></div>
<div style="left:1870px;top:249px;width:63px;height:16px;background:#ffab52;"></div>
<div style="left:1401.5px;width:1000px;text-align:center;top:242.0px;height:30px;line-height:30px;font-size:15px;color:#1a1a1a;font-weight:700;font-family:'Liberation Sans',sans-serif;white-space:pre;">9</div>
<div style="left:1940px;top:248px;width:30px;height:18px;background:#1f1f1f;"></div>
<div style="left:1455.0px;width:1000px;text-align:center;top:243.0px;height:28px;line-height:28px;font-size:14px;color:#d8d8d8;font-weight:400;font-family:'Liberation Sans',sans-serif;white-space:pre;">S</div>
<div style="left:1455px;width:1000px;text-align:center;top:242.0px;height:30px;line-height:30px;font-size:15px;color:#d8d8d8;font-weight:400;font-family:'Liberation Sans',sans-serif;white-space:pre;">S</div>
<div style="left:1975px;top:248px;width:30px;height:18px;background:#1f1f1f;"></div>
<svg style="left:1975px;top:248px;" width="30" height="18" viewBox="0 0 30 18"><circle cx="15" cy="9" r="5.5" fill="#d8d8d8"/><path d="M15,5.5 V9 H12" fill="none" stroke="#1f1f1f" stroke-width="1.6"/></svg>
<div style="left:2011px;top:248px;width:4px;height:18px;background:#1e1e1e;"></div>
<div style="left:2017px;top:248px;width:4px;height:18px;background:#1e1e1e;"></div>
<div style="left:1869px;top:275px;width:65px;height:18px;background:#1f1f1f;"></div>
<div style="left:1870px;top:276px;width:63px;height:16px;background:#ffab52;"></div>
<div style="left:1401.5px;width:1000px;text-align:center;top:269.0px;height:30px;line-height:30px;font-size:15px;color:#1a1a1a;font-weight:700;font-family:'Liberation Sans',sans-serif;white-space:pre;">10</div>
<div style="left:1940px;top:275px;width:30px;height:18px;background:#1f1f1f;"></div>
<div style="left:1455.0px;width:1000px;text-align:center;top:270.0px;height:28px;line-height:28px;font-size:14px;color:#d8d8d8;font-weight:400;font-family:'Liberation Sans',sans-serif;white-space:pre;">S</div>
<div style="left:1455px;width:1000px;text-align:center;top:269.0px;height:30px;line-height:30px;font-size:15px;color:#d8d8d8;font-weight:400;font-family:'Liberation Sans',sans-serif;white-space:pre;">S</div>
<div style="left:1975px;top:275px;width:30px;height:18px;background:#1f1f1f;"></div>
<svg style="left:1975px;top:275px;" width="30" height="18" viewBox="0 0 30 18"><circle cx="15" cy="9" r="5.5" fill="#d8d8d8"/><path d="M15,5.5 V9 H12" fill="none" stroke="#1f1f1f" stroke-width="1.6"/></svg>
<div style="left:2011px;top:275px;width:4px;height:18px;background:#1e1e1e;"></div>
<div style="left:2017px;top:275px;width:4px;height:18px;background:#1e1e1e;"></div>
<div style="left:1869px;top:302px;width:65px;height:18px;background:#1f1f1f;"></div>
<div style="left:1870px;top:303px;width:63px;height:16px;background:#ffab52;"></div>
<div style="left:1401.5px;width:1000px;text-align:center;top:296.0px;height:30px;line-height:30px;font-size:15px;color:#1a1a1a;font-weight:700;font-family:'Liberation Sans',sans-serif;white-space:pre;">11</div>
<div style="left:1940px;top:302px;width:30px;height:18px;background:#1f1f1f;"></div>
<div style="left:1455.0px;width:1000px;text-align:center;top:297.0px;height:28px;line-height:28px;font-size:14px;color:#d8d8d8;font-weight:400;font-family:'Liberation Sans',sans-serif;white-space:pre;">S</div>
<div style="left:1455px;width:1000px;text-align:center;top:296.0px;height:30px;line-height:30px;font-size:15px;color:#d8d8d8;font-weight:400;font-family:'Liberation Sans',sans-serif;white-space:pre;">S</div>
<div style="left:1975px;top:302px;width:30px;height:18px;background:#1f1f1f;"></div>
<svg style="left:1975px;top:302px;" width="30" height="18" viewBox="0 0 30 18"><circle cx="15" cy="9" r="5.5" fill="#d8d8d8"/><path d="M15,5.5 V9 H12" fill="none" stroke="#1f1f1f" stroke-width="1.6"/></svg>
<div style="left:2011px;top:302px;width:4px;height:18px;background:#1e1e1e;"></div>
<div style="left:2017px;top:302px;width:4px;height:18px;background:#1e1e1e;"></div>
<div style="left:1869px;top:326px;width:65px;height:18px;background:#1f1f1f;"></div>
<div style="left:1870px;top:327px;width:43px;height:16px;background:#00788a;"></div>
<div style="left:1401px;width:1000px;text-align:center;top:320.0px;height:30px;line-height:30px;font-size:15px;color:#9ad0dc;font-weight:400;font-family:'Liberation Sans',sans-serif;white-space:pre;">-6.6</div>
<div style="left:1940px;top:326px;width:65px;height:18px;background:#1f1f1f;"></div>
<div style="left:1472.5px;width:1000px;text-align:center;top:321.0px;height:28px;line-height:28px;font-size:14px;color:#c4c4c4;font-weight:400;font-family:'Liberation Sans',sans-serif;white-space:pre;">C</div>
<div style="left:1869px;top:350px;width:42px;height:18px;background:#1f1f1f;"></div>
<div style="left:1916px;top:350px;width:42px;height:18px;background:#1f1f1f;"></div>
<div style="left:1390px;width:1000px;text-align:center;top:341.5px;height:34px;line-height:34px;font-size:17px;color:#c4c4c4;font-weight:400;font-family:'Liberation Sans',sans-serif;white-space:pre;-webkit-text-stroke-width:0.6px;">−∞</div>
<div style="left:1437px;width:1000px;text-align:center;top:341.5px;height:34px;line-height:34px;font-size:17px;color:#c4c4c4;font-weight:400;font-family:'Liberation Sans',sans-serif;white-space:pre;-webkit-text-stroke-width:0.6px;">−∞</div>
<div style="left:2011px;top:302px;width:4px;height:116px;background:#1e1e1e;"></div>
<div style="left:2017px;top:302px;width:4px;height:116px;background:#1e1e1e;"></div>
<div style="left:2011px;top:377px;width:4px;height:41px;background:#22e05a;"></div>
<div style="left:2017px;top:372px;width:4px;height:46px;background:#22e05a;"></div>
<div style="left:2011px;top:349px;width:4px;height:2px;background:#9acd32;"></div>
<div style="left:2017px;top:345px;width:4px;height:2px;background:#9acd32;"></div>
<div style="left:1869px;top:427px;width:65px;height:18px;background:#1f1f1f;"></div>
<div style="left:1870px;top:428px;width:53px;height:16px;background:#00788a;"></div>
<div style="left:1401px;width:1000px;text-align:center;top:421.0px;height:30px;line-height:30px;font-size:15px;color:#a0d0dc;font-weight:400;font-family:'Liberation Sans',sans-serif;white-space:pre;">0</div>
<div style="left:1940px;top:427px;width:65px;height:18px;background:#1f1f1f;"></div>
<div style="left:1941px;top:428px;width:53px;height:16px;background:#3a6ac8;"></div>
<div style="left:1472px;width:1000px;text-align:center;top:421.0px;height:30px;line-height:30px;font-size:15px;color:#b8c8f0;font-weight:400;font-family:'Liberation Sans',sans-serif;white-space:pre;">0</div>
<div style="left:2011px;top:427px;width:4px;height:18px;background:#1e1e1e;"></div>
<div style="left:2017px;top:427px;width:4px;height:18px;background:#1e1e1e;"></div>
<div style="left:2011px;top:437px;width:4px;height:8px;background:#22e05a;"></div>
<div style="left:2017px;top:437px;width:4px;height:8px;background:#22e05a;"></div>
<div style="left:2011px;top:433px;width:4px;height:2px;background:#c8d040;"></div>
<div style="left:2017px;top:432px;width:4px;height:2px;background:#c8d040;"></div>
<div style="left:1715px;top:451px;width:320px;height:30px;background:#363636;border-radius:0 0 5px 0;"></div>
<div style="left:1717px;top:457px;width:21px;height:17px;background:#ffab52;"></div>
<svg style="left:1717px;top:457px;" width="21" height="17" viewBox="0 0 21 17"><g stroke="#1a1a1a" stroke-width="1.3"><line x1="4" y1="6" x2="4" y2="11"/><line x1="7" y1="4" x2="7" y2="13"/><line x1="10.5" y1="2" x2="10.5" y2="15"/><line x1="14" y1="4" x2="14" y2="13"/><line x1="17" y1="6" x2="17" y2="11"/></g></svg>
<div style="left:1742px;top:457px;width:50px;height:17px;background:#1f1f1f;"></div>
<div style="left:1743px;top:458px;width:14px;height:15px;background:#00788a;"></div>
<div style="left:1267px;width:1000px;text-align:center;top:450.5px;height:30px;line-height:30px;font-size:15px;color:#bcbcbc;font-weight:400;font-family:'Liberation Sans',sans-serif;white-space:pre;">1.00x</div>
<div style="left:1815px;top:457px;width:21px;height:17px;background:#1f1f1f;"></div>
<div style="left:1325.5px;width:1000px;text-align:center;top:450.5px;height:30px;line-height:30px;font-size:15px;color:#c4c4c4;font-weight:400;font-family:'Liberation Sans',sans-serif;white-space:pre;">H</div>
<div style="left:1840px;top:457px;width:21px;height:17px;background:#1f1f1f;"></div>
<div style="left:1350.5px;width:1000px;text-align:center;top:450.5px;height:30px;line-height:30px;font-size:15px;color:#c4c4c4;font-weight:400;font-family:'Liberation Sans',sans-serif;white-space:pre;">W</div>
<div style="left:13px;top:493px;width:242px;height:714px;background:#363636;border-radius:5px;"></div>
<div style="left:13px;top:493px;width:242px;height:25px;background:#f9f27c;border-radius:5px 5px 0 0;"></div>
<div style="left:19px;top:499px;width:12px;height:12px;background:#ffab52;border:1.5px solid #1a1a1a;box-sizing:border-box;"></div>
<div style="left:37px;top:490.5px;height:30px;line-height:30px;font-size:15px;color:#2e2e1a;font-weight:400;font-family:'Liberation Sans',sans-serif;white-space:pre;">Clip</div>
<div style="left:13px;top:518px;width:242px;height:1px;background:#262626;"></div>
<div style="left:13px;top:519px;width:242px;height:24px;background:#474747;"></div>
<div style="left:13px;top:543px;width:242px;height:2px;background:#2a2a2a;"></div>
<div style="left:38px;top:516.0px;height:30px;line-height:30px;font-size:15px;color:#bababa;font-weight:400;font-family:'Liberation Sans',sans-serif;white-space:pre;">Clip</div>
<svg style="left:226px;top:525px;" width="14" height="13" viewBox="0 0 14 13"><polygon points="12,1 12,12 2,6.5" fill="#c0c0c0"/></svg>
<div style="left:13px;top:545px;width:242px;height:24px;background:#474747;"></div>
<div style="left:13px;top:569px;width:242px;height:2px;background:#2a2a2a;"></div>
<div style="left:38px;top:542.0px;height:30px;line-height:30px;font-size:15px;color:#bababa;font-weight:400;font-family:'Liberation Sans',sans-serif;white-space:pre;">Launch</div>
<svg style="left:226px;top:551px;" width="14" height="13" viewBox="0 0 14 13"><polygon points="12,1 12,12 2,6.5" fill="#c0c0c0"/></svg>
<div style="left:13px;top:570px;width:242px;height:24px;background:#474747;"></div>
<div style="left:13px;top:594px;width:242px;height:2px;background:#2a2a2a;"></div>
<div style="left:38px;top:567.0px;height:30px;line-height:30px;font-size:15px;color:#bababa;font-weight:400;font-family:'Liberation Sans',sans-serif;white-space:pre;">Pitch &amp; Time</div>
<svg style="left:226px;top:576px;" width="14" height="13" viewBox="0 0 14 13"><polygon points="12,1 12,12 2,6.5" fill="#c0c0c0"/></svg>
<div style="left:13px;top:596px;width:242px;height:24px;background:#474747;"></div>
<div style="left:13px;top:620px;width:242px;height:0px;background:#2a2a2a;"></div>
<div style="left:38px;top:593.0px;height:30px;line-height:30px;font-size:15px;color:#bababa;font-weight:400;font-family:'Liberation Sans',sans-serif;white-space:pre;">Transform</div>
<svg style="left:226px;top:602px;" width="14" height="13" viewBox="0 0 14 13"><polygon points="2,2 12,2 7,11" fill="#c0c0c0"/></svg>
<svg style="left:17px;top:523px;" width="18" height="18" viewBox="0 0 18 18"><rect x="2.5" y="2.5" width="12" height="12" fill="none" stroke="#c0c0c0" stroke-width="1.2"/><polygon points="6.5,5.5 12,8.5 6.5,11.5" fill="#c0c0c0"/></svg>
<svg style="left:17px;top:548px;" width="18" height="18" viewBox="0 0 18 18"><rect x="3" y="3" width="2" height="12" fill="#c0c0c0"/><rect x="6.5" y="4" width="1.6" height="10" fill="#c0c0c0"/><polygon points="10,6 14,9 10,12" fill="#c0c0c0"/></svg>
<svg style="left:17px;top:573px;" width="18" height="18" viewBox="0 0 18 18"><line x1="2" y1="6" x2="16" y2="6" stroke="#c0c0c0" stroke-width="1.4"/><circle cx="4" cy="6" r="1.8" fill="#c0c0c0"/><line x1="2" y1="12" x2="16" y2="12" stroke="#c0c0c0" stroke-width="1.4"/><rect x="7" y="10" width="4" height="4" fill="#c0c0c0"/></svg>
<svg style="left:17px;top:599px;" width="18" height="18" viewBox="0 0 18 18"><circle cx="6" cy="7" r="3.5" fill="#c0c0c0"/><circle cx="10" cy="11" r="4.5" fill="none" stroke="#c0c0c0" stroke-width="1.4" stroke-dasharray="2 2"/></svg>
<svg style="left:27px;top:626px;" width="18" height="18" viewBox="0 0 18 18"><circle cx="9" cy="9" r="9" fill="#1e1e1e"/><path d="M5.5,9 A3.7,3.7 0 1 0 7,6" fill="none" stroke="#c8c8c8" stroke-width="1.5"/><polygon points="4.5,4.5 8.5,5.2 6,8.5" fill="#c8c8c8"/></svg>
<div style="left:51px;top:626px;width:189px;height:18px;background:#1e1e1e;border:1px solid #141414;box-sizing:border-box;"></div>
<div style="left:55px;top:620.0px;height:30px;line-height:30px;font-size:15px;color:#c4c4c4;font-weight:400;font-family:'Liberation Sans',sans-serif;white-space:pre;">Articulate</div>
<svg style="left:226px;top:630px;" width="12" height="10" viewBox="0 0 12 10"><polygon points="1,1 11,1 6,8.5" fill="#d0d0d0"/></svg>
<div style="left:27px;top:650px;width:213px;height:1px;background:#2a2a2a;"></div>
<div style="left:27px;top:657px;width:111px;height:194px;background:#1c1c1c;border-radius:4px;"></div>
<svg style="left:27px;top:657px;" width="111" height="110" viewBox="0 0 111 110"><g fill="none" stroke="#4a4a4a" stroke-width="2"><circle cx="34.3" cy="73.8" r="9.3"/><line x1="43.4" y1="74" x2="43.4" y2="37"/><path d="M43.4,37 Q48,41 51,42 Q54,44 54.5,48"/><circle cx="64.1" cy="63.8" r="9.3"/><line x1="73.2" y1="64" x2="73.2" y2="27"/><path d="M73.2,27 Q78,31 81,32 Q84,34 84.5,38"/></g><path d="M42.5,85.5 Q57,90 67,77.5" fill="none" stroke="#f6a04c" stroke-width="2.2"/></svg>
<div style="left:33px;top:770px;width:99px;height:1px;background:#444444;"></div>
<div style="left:34px;top:778px;width:97px;height:18px;background:#ffab52;"></div>
<div style="left:-417.5px;width:1000px;text-align:center;top:772.0px;height:30px;line-height:30px;font-size:15px;color:#1a1a1a;font-weight:400;font-family:'Liberation Sans',sans-serif;white-space:pre;">Legato</div>
<div style="left:34px;top:802px;width:97px;height:18px;background:#1c1c1c;border:1.6px solid #f2a04e;box-sizing:border-box;"></div>
<div style="left:-417.5px;width:1000px;text-align:center;top:796.0px;height:30px;line-height:30px;font-size:15px;color:#f6ab5c;font-weight:400;font-family:'Liberation Sans',sans-serif;white-space:pre;">Tenuto</div>
<div style="left:34px;top:826px;width:97px;height:19px;background:#1c1c1c;border:1.6px solid #f2a04e;box-sizing:border-box;"></div>
<div style="left:-417.5px;width:1000px;text-align:center;top:820.5px;height:30px;line-height:30px;font-size:15px;color:#f6ab5c;font-weight:400;font-family:'Liberation Sans',sans-serif;white-space:pre;">Staccato</div>
<svg style="left:140px;top:640px;" width="100" height="220" viewBox="0 0 100 220"><path d="M36.4,96.6 A24.3,24.3 0 0 1 46.6,52.4" fill="none" stroke="#1a1a1a" stroke-width="3.4"/><path d="M53.4,52.4 A24.3,24.3 0 0 1 63.6,96.6" fill="none" stroke="#1a1a1a" stroke-width="3.4"/><line x1="50.0" y1="50.7" x2="50.0" y2="72.5" stroke="#1a1a1a" stroke-width="2.6"/><polygon points="45,39.6 55,39.6 50,45.6" fill="#1a1a1a"/><path d="M42.2,185.1 A17,17 0 0 1 48.0,153.8" fill="none" stroke="#1a1a1a" stroke-width="3.4"/><path d="M54.0,153.8 A17,17 0 0 1 59.8,185.1" fill="none" stroke="#1a1a1a" stroke-width="3.4"/><line x1="51.0" y1="152.0" x2="51.0" y2="166.5" stroke="#1a1a1a" stroke-width="2.6"/><polygon points="46,144 56,144 51,150" fill="#1a1a1a"/></svg>
<div style="left:-310px;width:1000px;text-align:center;top:656.0px;height:30px;line-height:30px;font-size:15px;color:#bcbcbc;font-weight:400;font-family:'Liberation Sans',sans-serif;white-space:pre;">Offset</div>
<div style="left:-310px;width:1000px;text-align:center;top:737.0px;height:30px;line-height:30px;font-size:15px;color:#bcbcbc;font-weight:400;font-family:'Liberation Sans',sans-serif;white-space:pre;">0.0 %</div>
<div style="left:-310px;width:1000px;text-align:center;top:761.0px;height:30px;line-height:30px;font-size:15px;color:#bcbcbc;font-weight:400;font-family:'Liberation Sans',sans-serif;white-space:pre;">Variation</div>
<div style="left:-310px;width:1000px;text-align:center;top:820.5px;height:30px;line-height:30px;font-size:15px;color:#bcbcbc;font-weight:400;font-family:'Liberation Sans',sans-serif;white-space:pre;">0.0 %</div>
<div style="left:27px;top:858px;width:213px;height:1px;background:#2a2a2a;"></div>
<div style="left:27px;top:865px;width:97px;height:18px;background:#ffab52;border:1px solid #1a1a1a;box-sizing:border-box;"></div>
<div style="left:-424.5px;width:1000px;text-align:center;top:859.0px;height:30px;line-height:30px;font-size:15px;color:#1a1a1a;font-weight:400;font-family:'Liberation Sans',sans-serif;white-space:pre;">Transform</div>
<svg style="left:222px;top:865px;" width="18" height="18" viewBox="0 0 18 18"><circle cx="9" cy="9" r="9" fill="#1e1e1e"/><path d="M12.5,9 A3.7,3.7 0 1 1 11,6" fill="none" stroke="#c8c8c8" stroke-width="1.5"/><polygon points="13.5,4.5 9.5,5.2 12,8.5" fill="#c8c8c8"/></svg>
<div style="left:13px;top:889px;width:242px;height:1px;background:#2a2a2a;"></div>
<div style="left:13px;top:890px;width:242px;height:24px;background:#474747;"></div>
<svg style="left:17px;top:893px;" width="18" height="18" viewBox="0 0 18 18"><circle cx="9" cy="9" r="2.5" fill="#c0c0c0"/><circle cx="9" cy="9" r="6" fill="none" stroke="#c0c0c0" stroke-width="1.4" stroke-dasharray="2.5 2.2"/></svg>
<div style="left:38px;top:887.0px;height:30px;line-height:30px;font-size:15px;color:#bababa;font-weight:400;font-family:'Liberation Sans',sans-serif;white-space:pre;">Generate</div>
<svg style="left:226px;top:896px;" width="14" height="13" viewBox="0 0 14 13"><polygon points="2,2 12,2 7,11" fill="#c0c0c0"/></svg>
<svg style="left:27px;top:920px;" width="18" height="18" viewBox="0 0 18 18"><circle cx="9" cy="9" r="9" fill="#1e1e1e"/><path d="M5.5,9 A3.7,3.7 0 1 0 7,6" fill="none" stroke="#c8c8c8" stroke-width="1.5"/><polygon points="4.5,4.5 8.5,5.2 6,8.5" fill="#c8c8c8"/></svg>
<div style="left:51px;top:920px;width:189px;height:18px;background:#1e1e1e;border:1px solid #141414;box-sizing:border-box;"></div>
<div style="left:55px;top:914.0px;height:30px;line-height:30px;font-size:15px;color:#c4c4c4;font-weight:400;font-family:'Liberation Sans',sans-serif;white-space:pre;">Stacks</div>
<svg style="left:226px;top:924px;" width="12" height="10" viewBox="0 0 12 10"><polygon points="1,1 11,1 6,8.5" fill="#d0d0d0"/></svg>
<div style="left:26px;top:945px;width:216px;height:208px;background:#1c1c1c;border-radius:4px;"></div>
<svg style="left:84px;top:952px;" width="98" height="97" viewBox="0 0 98 97"><rect x="1.5" y="1.5" width="95" height="94" rx="3" fill="#004f5c" stroke="#12bcd4" stroke-width="2"/><g fill="none" stroke="#12bcd4" stroke-width="1.6"><path d="M6,12 V6 H12"/><path d="M86,6 H92 V12"/><path d="M92,85 V91 H86"/><path d="M12,91 H6 V85"/></g><polygon points="45,12 53,12 49,7" fill="#12bcd4"/><polygon points="45,85 53,85 49,90" fill="#12bcd4"/><polyline points="14,29 37,68 61,29 84,68" fill="none" stroke="#a89478" stroke-width="1.2"/><rect x="32.8" y="63.8" width="8.5" height="8.5" rx="1" fill="#bcbcbc"/><rect x="56" y="24" width="8.5" height="8.5" rx="1" fill="#bcbcbc"/><rect x="79.5" y="63.8" width="8.5" height="8.5" rx="1" fill="#bcbcbc"/><polygon points="14,22 21,29 14,36 7,29" fill="#f6a04c"/></svg>
<svg style="left:215px;top:975px;" width="20" height="20" viewBox="0 0 20 20"><circle cx="10" cy="10" r="8.5" fill="none" stroke="#14b8d0" stroke-width="1.5"/><line x1="5.5" y1="10" x2="14.5" y2="10" stroke="#14b8d0" stroke-width="1.5"/><line x1="10" y1="5.5" x2="10" y2="14.5" stroke="#14b8d0" stroke-width="1.5"/></svg>
<svg style="left:215px;top:1005px;" width="20" height="20" viewBox="0 0 20 20"><circle cx="10" cy="10" r="8.5" fill="none" stroke="#0a5664" stroke-width="1.5"/><line x1="5.5" y1="10" x2="14.5" y2="10" stroke="#0a5664" stroke-width="1.5"/></svg>
<div style="left:31px;top:1052px;width:206px;height:1px;background:#3c3c3c;"></div>
<div style="left:-410px;width:1000px;text-align:center;top:1049.0px;height:30px;line-height:30px;font-size:15px;color:#a8a8a8;font-weight:400;font-family:'Liberation Sans',sans-serif;white-space:pre;">Root</div>
<div style="left:-322px;width:1000px;text-align:center;top:1049.0px;height:30px;line-height:30px;font-size:15px;color:#a8a8a8;font-weight:400;font-family:'Liberation Sans',sans-serif;white-space:pre;">Inversion</div>
<svg style="left:60px;top:1062px;" width="60" height="60" viewBox="0 0 60 60"><path d="M31.5,12.1 A17,17 0 0 1 42.0,41.0" fill="none" stroke="#9a9a9a" stroke-width="3"/><path d="M18.0,41.0 A17,17 0 0 1 25.6,12.6" fill="none" stroke="#14b8d0" stroke-width="3"/><line x1="31" y1="29" x2="29" y2="11" stroke="#9a9a9a" stroke-width="3"/></svg>
<svg style="left:148px;top:1062px;" width="60" height="60" viewBox="0 0 60 60"><path d="M16.1,38.8 A17,17 0 1 1 42.0,41.0" fill="none" stroke="#9a9a9a" stroke-width="3"/><line x1="31" y1="31" x2="22" y2="46" stroke="#9a9a9a" stroke-width="3"/></svg>
<div style="left:-410px;width:1000px;text-align:center;top:1099.0px;height:30px;line-height:30px;font-size:15px;color:#14b8d0;font-weight:400;font-family:'Liberation Sans',sans-serif;white-space:pre;">C#3</div>
<div style="left:-322px;width:1000px;text-align:center;top:1099.0px;height:30px;line-height:30px;font-size:15px;color:#14b8d0;font-weight:400;font-family:'Liberation Sans',sans-serif;white-space:pre;">0</div>
<div style="left:31px;top:1125px;width:206px;height:1px;background:#3c3c3c;"></div>
<div style="left:33px;top:1124.0px;height:30px;line-height:30px;font-size:15px;color:#a8a8a8;font-weight:400;font-family:'Liberation Sans',sans-serif;white-space:pre;">Duration</div>
<div style="left:-381px;width:1000px;text-align:center;top:1124.0px;height:30px;line-height:30px;font-size:15px;color:#f6a04c;font-weight:400;font-family:'Liberation Sans',sans-serif;white-space:pre;">1</div>
<div style="left:146px;top:1124.0px;height:30px;line-height:30px;font-size:15px;color:#a8a8a8;font-weight:400;font-family:'Liberation Sans',sans-serif;white-space:pre;">Offset</div>
<div style="left:-273px;width:1000px;text-align:center;top:1124.0px;height:30px;line-height:30px;font-size:15px;color:#f6a04c;font-weight:400;font-family:'Liberation Sans',sans-serif;white-space:pre;">0</div>
<div style="left:27px;top:1160px;width:97px;height:18px;background:#ffab52;border:1px solid #1a1a1a;box-sizing:border-box;"></div>
<div style="left:-424.5px;width:1000px;text-align:center;top:1154.0px;height:30px;line-height:30px;font-size:15px;color:#1a1a1a;font-weight:400;font-family:'Liberation Sans',sans-serif;white-space:pre;">Generate</div>
<svg style="left:222px;top:1159px;" width="18" height="18" viewBox="0 0 18 18"><circle cx="9" cy="9" r="9" fill="#1e1e1e"/><path d="M12.5,9 A3.7,3.7 0 1 1 11,6" fill="none" stroke="#c8c8c8" stroke-width="1.5"/><polygon points="13.5,4.5 9.5,5.2 12,8.5" fill="#c8c8c8"/></svg>
<div style="left:13px;top:1182px;width:242px;height:2px;background:#2a2a2a;"></div>
<div style="left:257px;top:493px;width:1778px;height:714px;background:#363636;border-radius:5px;"></div>
<div style="left:257px;top:493px;width:1778px;height:25px;background:#363636;border-radius:5px 5px 0 0;"></div>
<div style="left:257px;top:518px;width:1778px;height:1px;background:#262626;"></div>
<div style="left:260px;top:496px;width:51px;height:19px;background:#1e1e1e;border:1px solid #151515;box-sizing:border-box;"></div>
<div style="left:-214.5px;width:1000px;text-align:center;top:490.5px;height:30px;line-height:30px;font-size:15px;color:#bcbcbc;font-weight:400;font-family:'Liberation Sans',sans-serif;white-space:pre;">Fold</div>
<div style="left:317px;top:496px;width:51px;height:19px;background:#1e1e1e;border:1px solid #151515;box-sizing:border-box;"></div>
<div style="left:-157.5px;width:1000px;text-align:center;top:490.5px;height:30px;line-height:30px;font-size:15px;color:#bcbcbc;font-weight:400;font-family:'Liberation Sans',sans-serif;white-space:pre;">Scale</div>
<div style="left:374px;top:497px;width:1px;height:17px;background:#2c2c2c;"></div>
<div style="left:382px;top:497px;width:17px;height:17px;background:#b794f6;border:1px solid #1a1a1a;box-sizing:border-box;"></div>
<svg style="left:382px;top:497px;" width="17" height="17" viewBox="0 0 17 17"><polyline points="4,8.5 7.5,12.5 13.5,4" fill="none" stroke="#111" stroke-width="1.6"/></svg>
<div style="left:404px;top:490.5px;height:30px;line-height:30px;font-size:15px;color:#bcbcbc;font-weight:400;font-family:'Liberation Sans',sans-serif;white-space:pre;">Highlight Scale</div>
<div style="left:1014px;top:494px;width:86px;height:23px;background:#474747;"></div>
<div style="left:1100px;top:494px;width:2px;height:23px;background:#2e2e2e;"></div>
<div style="left:1102px;top:494px;width:86px;height:23px;background:#3a3a3a;"></div>
<div style="left:1188px;top:494px;width:2px;height:23px;background:#2e2e2e;"></div>
<div style="left:1190px;top:494px;width:85px;height:23px;background:#3a3a3a;"></div>
<div style="left:1275px;top:494px;width:2px;height:23px;background:#2e2e2e;"></div>
<div style="left:557px;width:1000px;text-align:center;top:490.5px;height:30px;line-height:30px;font-size:15px;color:#c4c4c4;font-weight:400;font-family:'Liberation Sans',sans-serif;white-space:pre;">Notes</div>
<div style="left:645px;width:1000px;text-align:center;top:490.5px;height:30px;line-height:30px;font-size:15px;color:#9a9a9a;font-weight:400;font-family:'Liberation Sans',sans-serif;white-space:pre;">Envelopes</div>
<div style="left:732.5px;width:1000px;text-align:center;top:490.5px;height:30px;line-height:30px;font-size:15px;color:#9a9a9a;font-weight:400;font-family:'Liberation Sans',sans-serif;white-space:pre;">MPE</div>
<div style="left:1011.5px;width:1000px;text-align:right;top:490.5px;height:30px;line-height:30px;font-size:15px;color:#bcbcbc;font-weight:400;font-family:'Liberation Sans',sans-serif;white-space:pre;">1/16</div>
<svg style="left:2017px;top:500px;" width="12" height="12" viewBox="0 0 12 12"><polygon points="1,2 11,2 6,9" fill="#c0c0c0"/></svg>
<div style="left:257px;top:519px;width:1778px;height:24px;background:#363636;"></div>
<div style="left:257px;top:519px;width:80px;height:24px;background:#474747;"></div>
<div style="left:762.7px;top:519px;width:424.39999999999986px;height:24px;background:#3c3c3c;"></div>
<div style="left:1611.4999999999998px;top:519px;width:423.5000000000002px;height:24px;background:#3c3c3c;"></div>
<div style="left:338px;top:535px;width:1px;height:8px;background:#8a8a8a;"></div>
<div style="left:338px;top:535px;width:3px;height:1px;background:#8a8a8a;"></div>
<div style="left:344px;top:520.5px;height:30px;line-height:30px;font-size:15px;color:#a0a0a0;font-weight:400;font-family:'Liberation Sans',sans-serif;white-space:pre;">1</div>
<div style="left:391px;top:541px;width:2px;height:2px;background:#7a7a7a;"></div>
<div style="left:444px;top:535px;width:1px;height:8px;background:#8a8a8a;"></div>
<div style="left:444px;top:535px;width:3px;height:1px;background:#8a8a8a;"></div>
<div style="left:450px;top:520.5px;height:30px;line-height:30px;font-size:15px;color:#a0a0a0;font-weight:400;font-family:'Liberation Sans',sans-serif;white-space:pre;">1.2</div>
<div style="left:497px;top:541px;width:2px;height:2px;background:#7a7a7a;"></div>
<div style="left:550px;top:535px;width:1px;height:8px;background:#8a8a8a;"></div>
<div style="left:550px;top:535px;width:3px;height:1px;background:#8a8a8a;"></div>
<div style="left:556px;top:520.5px;height:30px;line-height:30px;font-size:15px;color:#a0a0a0;font-weight:400;font-family:'Liberation Sans',sans-serif;white-space:pre;">1.3</div>
<div style="left:604px;top:541px;width:2px;height:2px;background:#7a7a7a;"></div>
<div style="left:657px;top:535px;width:1px;height:8px;background:#8a8a8a;"></div>
<div style="left:657px;top:535px;width:3px;height:1px;background:#8a8a8a;"></div>
<div style="left:663px;top:520.5px;height:30px;line-height:30px;font-size:15px;color:#a0a0a0;font-weight:400;font-family:'Liberation Sans',sans-serif;white-space:pre;">1.4</div>
<div style="left:710px;top:541px;width:2px;height:2px;background:#7a7a7a;"></div>
<div style="left:763px;top:535px;width:1px;height:8px;background:#8a8a8a;"></div>
<div style="left:763px;top:535px;width:3px;height:1px;background:#8a8a8a;"></div>
<div style="left:769px;top:520.5px;height:30px;line-height:30px;font-size:15px;color:#a0a0a0;font-weight:400;font-family:'Liberation Sans',sans-serif;white-space:pre;">2</div>
<div style="left:816px;top:541px;width:2px;height:2px;background:#7a7a7a;"></div>
<div style="left:869px;top:535px;width:1px;height:8px;background:#8a8a8a;"></div>
<div style="left:869px;top:535px;width:3px;height:1px;background:#8a8a8a;"></div>
<div style="left:875px;top:520.5px;height:30px;line-height:30px;font-size:15px;color:#a0a0a0;font-weight:400;font-family:'Liberation Sans',sans-serif;white-space:pre;">2.2</div>
<div style="left:922px;top:541px;width:2px;height:2px;background:#7a7a7a;"></div>
<div style="left:975px;top:535px;width:1px;height:8px;background:#8a8a8a;"></div>
<div style="left:975px;top:535px;width:3px;height:1px;background:#8a8a8a;"></div>
<div style="left:981px;top:520.5px;height:30px;line-height:30px;font-size:15px;color:#a0a0a0;font-weight:400;font-family:'Liberation Sans',sans-serif;white-space:pre;">2.3</div>
<div style="left:1028px;top:541px;width:2px;height:2px;background:#7a7a7a;"></div>
<div style="left:1081px;top:535px;width:1px;height:8px;background:#8a8a8a;"></div>
<div style="left:1081px;top:535px;width:3px;height:1px;background:#8a8a8a;"></div>
<div style="left:1087px;top:520.5px;height:30px;line-height:30px;font-size:15px;color:#a0a0a0;font-weight:400;font-family:'Liberation Sans',sans-serif;white-space:pre;">2.4</div>
<div style="left:1134px;top:541px;width:2px;height:2px;background:#7a7a7a;"></div>
<div style="left:1187px;top:535px;width:1px;height:8px;background:#8a8a8a;"></div>
<div style="left:1187px;top:535px;width:3px;height:1px;background:#8a8a8a;"></div>
<div style="left:1193px;top:520.5px;height:30px;line-height:30px;font-size:15px;color:#a0a0a0;font-weight:400;font-family:'Liberation Sans',sans-serif;white-space:pre;">3</div>
<div style="left:1240px;top:541px;width:2px;height:2px;background:#7a7a7a;"></div>
<div style="left:1293px;top:535px;width:1px;height:8px;background:#8a8a8a;"></div>
<div style="left:1293px;top:535px;width:3px;height:1px;background:#8a8a8a;"></div>
<div style="left:1299px;top:520.5px;height:30px;line-height:30px;font-size:15px;color:#a0a0a0;font-weight:400;font-family:'Liberation Sans',sans-serif;white-space:pre;">3.2</div>
<div style="left:1346px;top:541px;width:2px;height:2px;background:#7a7a7a;"></div>
<div style="left:1399px;top:535px;width:1px;height:8px;background:#8a8a8a;"></div>
<div style="left:1399px;top:535px;width:3px;height:1px;background:#8a8a8a;"></div>
<div style="left:1405px;top:520.5px;height:30px;line-height:30px;font-size:15px;color:#a0a0a0;font-weight:400;font-family:'Liberation Sans',sans-serif;white-space:pre;">3.3</div>
<div style="left:1452px;top:541px;width:2px;height:2px;background:#7a7a7a;"></div>
<div style="left:1505px;top:535px;width:1px;height:8px;background:#8a8a8a;"></div>
<div style="left:1505px;top:535px;width:3px;height:1px;background:#8a8a8a;"></div>
<div style="left:1511px;top:520.5px;height:30px;line-height:30px;font-size:15px;color:#a0a0a0;font-weight:400;font-family:'Liberation Sans',sans-serif;white-space:pre;">3.4</div>
<div style="left:1558px;top:541px;width:2px;height:2px;background:#7a7a7a;"></div>
<div style="left:1611px;top:535px;width:1px;height:8px;background:#8a8a8a;"></div>
<div style="left:1611px;top:535px;width:3px;height:1px;background:#8a8a8a;"></div>
<div style="left:1617px;top:520.5px;height:30px;line-height:30px;font-size:15px;color:#a0a0a0;font-weight:400;font-family:'Liberation Sans',sans-serif;white-space:pre;">4</div>
<div style="left:1665px;top:541px;width:2px;height:2px;background:#7a7a7a;"></div>
<div style="left:1718px;top:535px;width:1px;height:8px;background:#8a8a8a;"></div>
<div style="left:1718px;top:535px;width:3px;height:1px;background:#8a8a8a;"></div>
<div style="left:1724px;top:520.5px;height:30px;line-height:30px;font-size:15px;color:#a0a0a0;font-weight:400;font-family:'Liberation Sans',sans-serif;white-space:pre;">4.2</div>
<div style="left:1771px;top:541px;width:2px;height:2px;background:#7a7a7a;"></div>
<div style="left:1824px;top:535px;width:1px;height:8px;background:#8a8a8a;"></div>
<div style="left:1824px;top:535px;width:3px;height:1px;background:#8a8a8a;"></div>
<div style="left:1830px;top:520.5px;height:30px;line-height:30px;font-size:15px;color:#a0a0a0;font-weight:400;font-family:'Liberation Sans',sans-serif;white-space:pre;">4.3</div>
<div style="left:1877px;top:541px;width:2px;height:2px;background:#7a7a7a;"></div>
<div style="left:1930px;top:535px;width:1px;height:8px;background:#8a8a8a;"></div>
<div style="left:1930px;top:535px;width:3px;height:1px;background:#8a8a8a;"></div>
<div style="left:1936px;top:520.5px;height:30px;line-height:30px;font-size:15px;color:#a0a0a0;font-weight:400;font-family:'Liberation Sans',sans-serif;white-space:pre;">4.4</div>
<div style="left:1983px;top:541px;width:2px;height:2px;background:#7a7a7a;"></div>
<div style="left:257px;top:543px;width:80px;height:56px;background:#363636;"></div>
<div style="left:338px;top:543px;width:1697px;height:31px;background:#333333;"></div>
<div style="left:338px;top:574px;width:1697px;height:25px;background:#2e2e2e;"></div>
<div style="left:762.7px;top:543px;width:424.39999999999986px;height:31px;background:#373737;"></div>
<div style="left:762.7px;top:574px;width:424.39999999999986px;height:25px;background:#313131;"></div>
<div style="left:1611.4999999999998px;top:543px;width:423.5000000000002px;height:31px;background:#373737;"></div>
<div style="left:1611.4999999999998px;top:574px;width:423.5000000000002px;height:25px;background:#313131;"></div>
<div style="left:338px;top:558px;width:1px;height:41px;background:rgba(0,0,0,0.14);"></div>
<div style="left:365px;top:558px;width:1px;height:41px;background:rgba(0,0,0,0.07);"></div>
<div style="left:391px;top:558px;width:1px;height:41px;background:rgba(0,0,0,0.07);"></div>
<div style="left:418px;top:558px;width:1px;height:41px;background:rgba(0,0,0,0.07);"></div>
<div style="left:444px;top:558px;width:1px;height:41px;background:rgba(0,0,0,0.14);"></div>
<div style="left:471px;top:558px;width:1px;height:41px;background:rgba(0,0,0,0.07);"></div>
<div style="left:497px;top:558px;width:1px;height:41px;background:rgba(0,0,0,0.07);"></div>
<div style="left:524px;top:558px;width:1px;height:41px;background:rgba(0,0,0,0.07);"></div>
<div style="left:550px;top:558px;width:1px;height:41px;background:rgba(0,0,0,0.14);"></div>
<div style="left:577px;top:558px;width:1px;height:41px;background:rgba(0,0,0,0.07);"></div>
<div style="left:604px;top:558px;width:1px;height:41px;background:rgba(0,0,0,0.07);"></div>
<div style="left:630px;top:558px;width:1px;height:41px;background:rgba(0,0,0,0.07);"></div>
<div style="left:657px;top:558px;width:1px;height:41px;background:rgba(0,0,0,0.14);"></div>
<div style="left:683px;top:558px;width:1px;height:41px;background:rgba(0,0,0,0.07);"></div>
<div style="left:710px;top:558px;width:1px;height:41px;background:rgba(0,0,0,0.07);"></div>
<div style="left:736px;top:558px;width:1px;height:41px;background:rgba(0,0,0,0.07);"></div>
<div style="left:763px;top:558px;width:1px;height:41px;background:rgba(0,0,0,0.14);"></div>
<div style="left:789px;top:558px;width:1px;height:41px;background:rgba(0,0,0,0.07);"></div>
<div style="left:816px;top:558px;width:1px;height:41px;background:rgba(0,0,0,0.07);"></div>
<div style="left:842px;top:558px;width:1px;height:41px;background:rgba(0,0,0,0.07);"></div>
<div style="left:869px;top:558px;width:1px;height:41px;background:rgba(0,0,0,0.14);"></div>
<div style="left:895px;top:558px;width:1px;height:41px;background:rgba(0,0,0,0.07);"></div>
<div style="left:922px;top:558px;width:1px;height:41px;background:rgba(0,0,0,0.07);"></div>
<div style="left:948px;top:558px;width:1px;height:41px;background:rgba(0,0,0,0.07);"></div>
<div style="left:975px;top:558px;width:1px;height:41px;background:rgba(0,0,0,0.14);"></div>
<div style="left:1001px;top:558px;width:1px;height:41px;background:rgba(0,0,0,0.07);"></div>
<div style="left:1028px;top:558px;width:1px;height:41px;background:rgba(0,0,0,0.07);"></div>
<div style="left:1054px;top:558px;width:1px;height:41px;background:rgba(0,0,0,0.07);"></div>
<div style="left:1081px;top:558px;width:1px;height:41px;background:rgba(0,0,0,0.14);"></div>
<div style="left:1108px;top:558px;width:1px;height:41px;background:rgba(0,0,0,0.07);"></div>
<div style="left:1134px;top:558px;width:1px;height:41px;background:rgba(0,0,0,0.07);"></div>
<div style="left:1161px;top:558px;width:1px;height:41px;background:rgba(0,0,0,0.07);"></div>
<div style="left:1187px;top:558px;width:1px;height:41px;background:rgba(0,0,0,0.14);"></div>
<div style="left:1214px;top:558px;width:1px;height:41px;background:rgba(0,0,0,0.07);"></div>
<div style="left:1240px;top:558px;width:1px;height:41px;background:rgba(0,0,0,0.07);"></div>
<div style="left:1267px;top:558px;width:1px;height:41px;background:rgba(0,0,0,0.07);"></div>
<div style="left:1293px;top:558px;width:1px;height:41px;background:rgba(0,0,0,0.14);"></div>
<div style="left:1320px;top:558px;width:1px;height:41px;background:rgba(0,0,0,0.07);"></div>
<div style="left:1346px;top:558px;width:1px;height:41px;background:rgba(0,0,0,0.07);"></div>
<div style="left:1373px;top:558px;width:1px;height:41px;background:rgba(0,0,0,0.07);"></div>
<div style="left:1399px;top:558px;width:1px;height:41px;background:rgba(0,0,0,0.14);"></div>
<div style="left:1426px;top:558px;width:1px;height:41px;background:rgba(0,0,0,0.07);"></div>
<div style="left:1452px;top:558px;width:1px;height:41px;background:rgba(0,0,0,0.07);"></div>
<div style="left:1479px;top:558px;width:1px;height:41px;background:rgba(0,0,0,0.07);"></div>
<div style="left:1505px;top:558px;width:1px;height:41px;background:rgba(0,0,0,0.14);"></div>
<div style="left:1532px;top:558px;width:1px;height:41px;background:rgba(0,0,0,0.07);"></div>
<div style="left:1558px;top:558px;width:1px;height:41px;background:rgba(0,0,0,0.07);"></div>
<div style="left:1585px;top:558px;width:1px;height:41px;background:rgba(0,0,0,0.07);"></div>
<div style="left:1611px;top:558px;width:1px;height:41px;background:rgba(0,0,0,0.14);"></div>
<div style="left:1638px;top:558px;width:1px;height:41px;background:rgba(0,0,0,0.07);"></div>
<div style="left:1665px;top:558px;width:1px;height:41px;background:rgba(0,0,0,0.07);"></div>
<div style="left:1691px;top:558px;width:1px;height:41px;background:rgba(0,0,0,0.07);"></div>
<div style="left:1718px;top:558px;width:1px;height:41px;background:rgba(0,0,0,0.14);"></div>
<div style="left:1744px;top:558px;width:1px;height:41px;background:rgba(0,0,0,0.07);"></div>
<div style="left:1771px;top:558px;width:1px;height:41px;background:rgba(0,0,0,0.07);"></div>
<div style="left:1797px;top:558px;width:1px;height:41px;background:rgba(0,0,0,0.07);"></div>
<div style="left:1824px;top:558px;width:1px;height:41px;background:rgba(0,0,0,0.14);"></div>
<div style="left:1850px;top:558px;width:1px;height:41px;background:rgba(0,0,0,0.07);"></div>
<div style="left:1877px;top:558px;width:1px;height:41px;background:rgba(0,0,0,0.07);"></div>
<div style="left:1903px;top:558px;width:1px;height:41px;background:rgba(0,0,0,0.07);"></div>
<div style="left:1930px;top:558px;width:1px;height:41px;background:rgba(0,0,0,0.14);"></div>
<div style="left:1956px;top:558px;width:1px;height:41px;background:rgba(0,0,0,0.07);"></div>
<div style="left:1983px;top:558px;width:1px;height:41px;background:rgba(0,0,0,0.07);"></div>
<div style="left:2009px;top:558px;width:1px;height:41px;background:rgba(0,0,0,0.07);"></div>
<div style="left:338px;top:543px;width:1697px;height:1px;background:#a8a8a8;"></div>
<div style="left:338px;top:557px;width:1697px;height:1px;background:#a8a8a8;"></div>
<div style="left:338px;top:544px;width:1697px;height:13px;background:#f9f27c;"></div>
<svg style="left:337px;top:543px;" width="22" height="32" viewBox="0 0 22 32"><polygon points="1.5,1 14,7.5 1.5,14" fill="#6a6a6a" stroke="#8a8a8a" stroke-width="0.8"/><polygon points="1.5,16 14,23 1.5,30" fill="#555" stroke="#8a8a8a" stroke-width="0.8"/></svg>
<svg style="left:2016px;top:543px;" width="19" height="32" viewBox="0 0 19 32"><polygon points="19,1 7,8 19,15" fill="#626262"/><polyline points="19,17 7.5,24 19,31" fill="none" stroke="#9a9a9a" stroke-width="1.2"/></svg>
<div style="left:338px;top:593px;width:849px;height:6px;background:#5f7c85;"></div>
<svg style="left:1186px;top:591px;" width="8" height="8" viewBox="0 0 8 8"><polygon points="1,7 7,1 1,1" fill="#5f7c85"/></svg>
<div style="left:300px;top:577px;width:34px;height:18px;background:#3d6fc4;border:1px solid #1a1a1a;box-sizing:border-box;"></div>
<svg style="left:300px;top:577px;" width="34" height="18" viewBox="0 0 34 18"><path d="M13.2,13.5 A5.6,5.6 0 1 1 20.8,13.5" fill="none" stroke="#111" stroke-width="1.8"/><rect x="11.8" y="10.5" width="2.6" height="5" rx="1" fill="#111"/><rect x="19.6" y="10.5" width="2.6" height="5" rx="1" fill="#111"/></svg>
<div style="left:257px;top:599px;width:44px;height:503px;background:#363636;"></div>
<div style="left:338px;top:600px;width:425px;height:28px;background:#564d69;"></div>
<div style="left:763px;top:600px;width:424px;height:28px;background:#5a5170;"></div>
<div style="left:1187px;top:600px;width:424px;height:28px;background:#564d69;"></div>
<div style="left:1611px;top:600px;width:424px;height:28px;background:#5a5170;"></div>
<div style="left:338px;top:627px;width:1697px;height:1px;background:#4a4258;"></div>
<div style="left:301px;top:600px;width:37px;height:28px;background:#b794f6;"></div>
<div style="left:301px;top:627px;width:37px;height:1px;background:#2e2e2e;"></div>
<div style="left:257px;top:600px;width:44px;height:28px;background:#363636;"></div>
<div style="left:257px;top:627px;width:44px;height:1px;background:#2a2a2a;"></div>
<div style="left:262px;top:602.0px;height:30px;line-height:30px;font-size:15px;color:#bcbcbc;font-weight:400;font-family:'Liberation Sans',sans-serif;white-space:pre;">C#4</div>
<div style="left:338px;top:628px;width:425px;height:34px;background:#383838;"></div>
<div style="left:763px;top:628px;width:424px;height:34px;background:#3c3c3c;"></div>
<div style="left:1187px;top:628px;width:424px;height:34px;background:#383838;"></div>
<div style="left:1611px;top:628px;width:424px;height:34px;background:#3c3c3c;"></div>
<div style="left:338px;top:661px;width:1697px;height:1px;background:#2e2e2e;"></div>
<div style="left:301px;top:628px;width:37px;height:34px;background:#8a8a8a;"></div>
<div style="left:301px;top:661px;width:37px;height:1px;background:#2e2e2e;"></div>
<div style="left:338px;top:662px;width:425px;height:34px;background:#564d69;"></div>
<div style="left:763px;top:662px;width:424px;height:34px;background:#5a5170;"></div>
<div style="left:1187px;top:662px;width:424px;height:34px;background:#564d69;"></div>
<div style="left:1611px;top:662px;width:424px;height:34px;background:#5a5170;"></div>
<div style="left:338px;top:695px;width:1697px;height:1px;background:#4a4258;"></div>
<div style="left:301px;top:662px;width:37px;height:34px;background:#8a8a8a;"></div>
<div style="left:326px;top:662px;width:12px;height:34px;background:#b794f6;"></div>
<div style="left:301px;top:695px;width:37px;height:1px;background:#2e2e2e;"></div>
<div style="left:338px;top:696px;width:425px;height:34px;background:#383838;"></div>
<div style="left:763px;top:696px;width:424px;height:34px;background:#3c3c3c;"></div>
<div style="left:1187px;top:696px;width:424px;height:34px;background:#383838;"></div>
<div style="left:1611px;top:696px;width:424px;height:34px;background:#3c3c3c;"></div>
<div style="left:338px;top:729px;width:1697px;height:1px;background:#2e2e2e;"></div>
<div style="left:301px;top:696px;width:37px;height:34px;background:#454545;"></div>
<div style="left:301px;top:729px;width:37px;height:1px;background:#2e2e2e;"></div>
<div style="left:338px;top:730px;width:425px;height:34px;background:#564d69;"></div>
<div style="left:763px;top:730px;width:424px;height:34px;background:#5a5170;"></div>
<div style="left:1187px;top:730px;width:424px;height:34px;background:#564d69;"></div>
<div style="left:1611px;top:730px;width:424px;height:34px;background:#5a5170;"></div>
<div style="left:338px;top:763px;width:1697px;height:1px;background:#4a4258;"></div>
<div style="left:301px;top:730px;width:37px;height:34px;background:#8a8a8a;"></div>
<div style="left:326px;top:730px;width:12px;height:34px;background:#b794f6;"></div>
<div style="left:301px;top:763px;width:37px;height:1px;background:#2e2e2e;"></div>
<div style="left:338px;top:764px;width:425px;height:34px;background:#564d69;"></div>
<div style="left:763px;top:764px;width:424px;height:34px;background:#5a5170;"></div>
<div style="left:1187px;top:764px;width:424px;height:34px;background:#564d69;"></div>
<div style="left:1611px;top:764px;width:424px;height:34px;background:#5a5170;"></div>
<div style="left:338px;top:797px;width:1697px;height:1px;background:#4a4258;"></div>
<div style="left:301px;top:764px;width:37px;height:34px;background:#454545;"></div>
<div style="left:326px;top:764px;width:12px;height:34px;background:#b794f6;"></div>
<div style="left:301px;top:797px;width:37px;height:1px;background:#2e2e2e;"></div>
<div style="left:338px;top:798px;width:425px;height:35px;background:#383838;"></div>
<div style="left:763px;top:798px;width:424px;height:35px;background:#3c3c3c;"></div>
<div style="left:1187px;top:798px;width:424px;height:35px;background:#383838;"></div>
<div style="left:1611px;top:798px;width:424px;height:35px;background:#3c3c3c;"></div>
<div style="left:338px;top:832px;width:1697px;height:1px;background:#2e2e2e;"></div>
<div style="left:301px;top:798px;width:37px;height:35px;background:#8a8a8a;"></div>
<div style="left:301px;top:832px;width:37px;height:1px;background:#2e2e2e;"></div>
<div style="left:338px;top:833px;width:425px;height:34px;background:#564d69;"></div>
<div style="left:763px;top:833px;width:424px;height:34px;background:#5a5170;"></div>
<div style="left:1187px;top:833px;width:424px;height:34px;background:#564d69;"></div>
<div style="left:1611px;top:833px;width:424px;height:34px;background:#5a5170;"></div>
<div style="left:338px;top:866px;width:1697px;height:1px;background:#4a4258;"></div>
<div style="left:301px;top:833px;width:37px;height:34px;background:#454545;"></div>
<div style="left:326px;top:833px;width:12px;height:34px;background:#b794f6;"></div>
<div style="left:301px;top:866px;width:37px;height:1px;background:#2e2e2e;"></div>
<div style="left:338px;top:867px;width:425px;height:34px;background:#383838;"></div>
<div style="left:763px;top:867px;width:424px;height:34px;background:#3c3c3c;"></div>
<div style="left:1187px;top:867px;width:424px;height:34px;background:#383838;"></div>
<div style="left:1611px;top:867px;width:424px;height:34px;background:#3c3c3c;"></div>
<div style="left:338px;top:900px;width:1697px;height:1px;background:#2e2e2e;"></div>
<div style="left:301px;top:867px;width:37px;height:34px;background:#8a8a8a;"></div>
<div style="left:301px;top:900px;width:37px;height:1px;background:#2e2e2e;"></div>
<div style="left:338px;top:901px;width:425px;height:34px;background:#564d69;"></div>
<div style="left:763px;top:901px;width:424px;height:34px;background:#5a5170;"></div>
<div style="left:1187px;top:901px;width:424px;height:34px;background:#564d69;"></div>
<div style="left:1611px;top:901px;width:424px;height:34px;background:#5a5170;"></div>
<div style="left:338px;top:934px;width:1697px;height:1px;background:#4a4258;"></div>
<div style="left:301px;top:901px;width:37px;height:34px;background:#8a8a8a;"></div>
<div style="left:326px;top:901px;width:12px;height:34px;background:#b794f6;"></div>
<div style="left:301px;top:934px;width:37px;height:1px;background:#2e2e2e;"></div>
<div style="left:338px;top:935px;width:425px;height:34px;background:#564d69;"></div>
<div style="left:763px;top:935px;width:424px;height:34px;background:#5a5170;"></div>
<div style="left:1187px;top:935px;width:424px;height:34px;background:#564d69;"></div>
<div style="left:1611px;top:935px;width:424px;height:34px;background:#5a5170;"></div>
<div style="left:338px;top:968px;width:1697px;height:1px;background:#4a4258;"></div>
<div style="left:301px;top:935px;width:37px;height:34px;background:#454545;"></div>
<div style="left:326px;top:935px;width:12px;height:34px;background:#b794f6;"></div>
<div style="left:301px;top:968px;width:37px;height:1px;background:#2e2e2e;"></div>
<div style="left:338px;top:969px;width:425px;height:34px;background:#383838;"></div>
<div style="left:763px;top:969px;width:424px;height:34px;background:#3c3c3c;"></div>
<div style="left:1187px;top:969px;width:424px;height:34px;background:#383838;"></div>
<div style="left:1611px;top:969px;width:424px;height:34px;background:#3c3c3c;"></div>
<div style="left:338px;top:1002px;width:1697px;height:1px;background:#2e2e2e;"></div>
<div style="left:301px;top:969px;width:37px;height:34px;background:#8a8a8a;"></div>
<div style="left:301px;top:1002px;width:37px;height:1px;background:#2e2e2e;"></div>
<div style="left:338px;top:1003px;width:425px;height:34px;background:#564d69;"></div>
<div style="left:763px;top:1003px;width:424px;height:34px;background:#5a5170;"></div>
<div style="left:1187px;top:1003px;width:424px;height:34px;background:#564d69;"></div>
<div style="left:1611px;top:1003px;width:424px;height:34px;background:#5a5170;"></div>
<div style="left:338px;top:1036px;width:1697px;height:1px;background:#4a4258;"></div>
<div style="left:301px;top:1003px;width:37px;height:34px;background:#b794f6;"></div>
<div style="left:301px;top:1036px;width:37px;height:1px;background:#2e2e2e;"></div>
<div style="left:257px;top:1003px;width:44px;height:34px;background:#363636;"></div>
<div style="left:257px;top:1036px;width:44px;height:1px;background:#2a2a2a;"></div>
<div style="left:262px;top:1011.0px;height:30px;line-height:30px;font-size:15px;color:#bcbcbc;font-weight:400;font-family:'Liberation Sans',sans-serif;white-space:pre;">C#3</div>
<div style="left:338px;top:1037px;width:425px;height:34px;background:#383838;"></div>
<div style="left:763px;top:1037px;width:424px;height:34px;background:#3c3c3c;"></div>
<div style="left:1187px;top:1037px;width:424px;height:34px;background:#383838;"></div>
<div style="left:1611px;top:1037px;width:424px;height:34px;background:#3c3c3c;"></div>
<div style="left:338px;top:1070px;width:1697px;height:1px;background:#2e2e2e;"></div>
<div style="left:301px;top:1037px;width:37px;height:34px;background:#8a8a8a;"></div>
<div style="left:301px;top:1070px;width:37px;height:1px;background:#2e2e2e;"></div>
<div style="left:338px;top:1071px;width:425px;height:31px;background:#564d69;"></div>
<div style="left:763px;top:1071px;width:424px;height:31px;background:#5a5170;"></div>
<div style="left:1187px;top:1071px;width:424px;height:31px;background:#564d69;"></div>
<div style="left:1611px;top:1071px;width:424px;height:31px;background:#5a5170;"></div>
<div style="left:338px;top:1101px;width:1697px;height:1px;background:#4a4258;"></div>
<div style="left:301px;top:1071px;width:37px;height:31px;background:#8a8a8a;"></div>
<div style="left:326px;top:1071px;width:12px;height:31px;background:#b794f6;"></div>
<div style="left:301px;top:1101px;width:37px;height:1px;background:#2e2e2e;"></div>
<div style="left:337.5px;top:543px;width:1.3000000000000114px;height:559px;background:#9a9a9a;"></div>
<div style="left:365px;top:600px;width:1px;height:502px;background:rgba(0,0,0,0.06);"></div>
<div style="left:391px;top:600px;width:1px;height:502px;background:rgba(0,0,0,0.06);"></div>
<div style="left:418px;top:600px;width:1px;height:502px;background:rgba(0,0,0,0.06);"></div>
<div style="left:444px;top:600px;width:1px;height:502px;background:rgba(0,0,0,0.13);"></div>
<div style="left:471px;top:600px;width:1px;height:502px;background:rgba(0,0,0,0.06);"></div>
<div style="left:497px;top:600px;width:1px;height:502px;background:rgba(0,0,0,0.06);"></div>
<div style="left:524px;top:600px;width:1px;height:502px;background:rgba(0,0,0,0.06);"></div>
<div style="left:550px;top:600px;width:1px;height:502px;background:rgba(0,0,0,0.13);"></div>
<div style="left:577px;top:600px;width:1px;height:502px;background:rgba(0,0,0,0.06);"></div>
<div style="left:604px;top:600px;width:1px;height:502px;background:rgba(0,0,0,0.06);"></div>
<div style="left:630px;top:600px;width:1px;height:502px;background:rgba(0,0,0,0.06);"></div>
<div style="left:657px;top:600px;width:1px;height:502px;background:rgba(0,0,0,0.13);"></div>
<div style="left:683px;top:600px;width:1px;height:502px;background:rgba(0,0,0,0.06);"></div>
<div style="left:710px;top:600px;width:1px;height:502px;background:rgba(0,0,0,0.06);"></div>
<div style="left:736px;top:600px;width:1px;height:502px;background:rgba(0,0,0,0.06);"></div>
<div style="left:763px;top:600px;width:1px;height:502px;background:rgba(0,0,0,0.2);"></div>
<div style="left:789px;top:600px;width:1px;height:502px;background:rgba(0,0,0,0.06);"></div>
<div style="left:816px;top:600px;width:1px;height:502px;background:rgba(0,0,0,0.06);"></div>
<div style="left:842px;top:600px;width:1px;height:502px;background:rgba(0,0,0,0.06);"></div>
<div style="left:869px;top:600px;width:1px;height:502px;background:rgba(0,0,0,0.13);"></div>
<div style="left:895px;top:600px;width:1px;height:502px;background:rgba(0,0,0,0.06);"></div>
<div style="left:922px;top:600px;width:1px;height:502px;background:rgba(0,0,0,0.06);"></div>
<div style="left:948px;top:600px;width:1px;height:502px;background:rgba(0,0,0,0.06);"></div>
<div style="left:975px;top:600px;width:1px;height:502px;background:rgba(0,0,0,0.13);"></div>
<div style="left:1001px;top:600px;width:1px;height:502px;background:rgba(0,0,0,0.06);"></div>
<div style="left:1028px;top:600px;width:1px;height:502px;background:rgba(0,0,0,0.06);"></div>
<div style="left:1054px;top:600px;width:1px;height:502px;background:rgba(0,0,0,0.06);"></div>
<div style="left:1081px;top:600px;width:1px;height:502px;background:rgba(0,0,0,0.13);"></div>
<div style="left:1108px;top:600px;width:1px;height:502px;background:rgba(0,0,0,0.06);"></div>
<div style="left:1134px;top:600px;width:1px;height:502px;background:rgba(0,0,0,0.06);"></div>
<div style="left:1161px;top:600px;width:1px;height:502px;background:rgba(0,0,0,0.06);"></div>
<div style="left:1187px;top:600px;width:1px;height:502px;background:rgba(0,0,0,0.2);"></div>
<div style="left:1214px;top:600px;width:1px;height:502px;background:rgba(0,0,0,0.06);"></div>
<div style="left:1240px;top:600px;width:1px;height:502px;background:rgba(0,0,0,0.06);"></div>
<div style="left:1267px;top:600px;width:1px;height:502px;background:rgba(0,0,0,0.06);"></div>
<div style="left:1293px;top:600px;width:1px;height:502px;background:rgba(0,0,0,0.13);"></div>
<div style="left:1320px;top:600px;width:1px;height:502px;background:rgba(0,0,0,0.06);"></div>
<div style="left:1346px;top:600px;width:1px;height:502px;background:rgba(0,0,0,0.06);"></div>
<div style="left:1373px;top:600px;width:1px;height:502px;background:rgba(0,0,0,0.06);"></div>
<div style="left:1399px;top:600px;width:1px;height:502px;background:rgba(0,0,0,0.13);"></div>
<div style="left:1426px;top:600px;width:1px;height:502px;background:rgba(0,0,0,0.06);"></div>
<div style="left:1452px;top:600px;width:1px;height:502px;background:rgba(0,0,0,0.06);"></div>
<div style="left:1479px;top:600px;width:1px;height:502px;background:rgba(0,0,0,0.06);"></div>
<div style="left:1505px;top:600px;width:1px;height:502px;background:rgba(0,0,0,0.13);"></div>
<div style="left:1532px;top:600px;width:1px;height:502px;background:rgba(0,0,0,0.06);"></div>
<div style="left:1558px;top:600px;width:1px;height:502px;background:rgba(0,0,0,0.06);"></div>
<div style="left:1585px;top:600px;width:1px;height:502px;background:rgba(0,0,0,0.06);"></div>
<div style="left:1611px;top:600px;width:1px;height:502px;background:rgba(0,0,0,0.2);"></div>
<div style="left:1638px;top:600px;width:1px;height:502px;background:rgba(0,0,0,0.06);"></div>
<div style="left:1665px;top:600px;width:1px;height:502px;background:rgba(0,0,0,0.06);"></div>
<div style="left:1691px;top:600px;width:1px;height:502px;background:rgba(0,0,0,0.06);"></div>
<div style="left:1718px;top:600px;width:1px;height:502px;background:rgba(0,0,0,0.13);"></div>
<div style="left:1744px;top:600px;width:1px;height:502px;background:rgba(0,0,0,0.06);"></div>
<div style="left:1771px;top:600px;width:1px;height:502px;background:rgba(0,0,0,0.06);"></div>
<div style="left:1797px;top:600px;width:1px;height:502px;background:rgba(0,0,0,0.06);"></div>
<div style="left:1824px;top:600px;width:1px;height:502px;background:rgba(0,0,0,0.13);"></div>
<div style="left:1850px;top:600px;width:1px;height:502px;background:rgba(0,0,0,0.06);"></div>
<div style="left:1877px;top:600px;width:1px;height:502px;background:rgba(0,0,0,0.06);"></div>
<div style="left:1903px;top:600px;width:1px;height:502px;background:rgba(0,0,0,0.06);"></div>
<div style="left:1930px;top:600px;width:1px;height:502px;background:rgba(0,0,0,0.13);"></div>
<div style="left:1956px;top:600px;width:1px;height:502px;background:rgba(0,0,0,0.06);"></div>
<div style="left:1983px;top:600px;width:1px;height:502px;background:rgba(0,0,0,0.06);"></div>
<div style="left:2009px;top:600px;width:1px;height:502px;background:rgba(0,0,0,0.06);"></div>
<div style="left:338px;top:663px;width:849px;height:33px;background:#a8dcf0;"></div>
<div style="left:341px;top:666px;width:843px;height:27px;background:#d6d46e;border:1.6px solid #111;box-sizing:border-box;"></div>
<div style="left:343px;top:666.0px;height:28px;line-height:28px;font-size:14px;color:#1a1a1a;font-weight:400;font-family:'Liberation Sans',sans-serif;white-space:pre;">B3</div>
<div style="left:338px;top:765px;width:849px;height:33px;background:#a8dcf0;"></div>
<div style="left:341px;top:768px;width:843px;height:27px;background:#d6d46e;border:1.6px solid #111;box-sizing:border-box;"></div>
<div style="left:343px;top:768.0px;height:28px;line-height:28px;font-size:14px;color:#1a1a1a;font-weight:400;font-family:'Liberation Sans',sans-serif;white-space:pre;">G#3</div>
<div style="left:338px;top:902px;width:849px;height:33px;background:#a8dcf0;"></div>
<div style="left:341px;top:905px;width:843px;height:27px;background:#d6d46e;border:1.6px solid #111;box-sizing:border-box;"></div>
<div style="left:343px;top:905.0px;height:28px;line-height:28px;font-size:14px;color:#1a1a1a;font-weight:400;font-family:'Liberation Sans',sans-serif;white-space:pre;">E3</div>
<div style="left:338px;top:1004px;width:849px;height:33px;background:#a8dcf0;"></div>
<div style="left:341px;top:1007px;width:843px;height:27px;background:#d6d46e;border:1.6px solid #111;box-sizing:border-box;"></div>
<div style="left:343px;top:1007.0px;height:28px;line-height:28px;font-size:14px;color:#1a1a1a;font-weight:400;font-family:'Liberation Sans',sans-serif;white-space:pre;">C#3</div>
<div style="left:1612px;top:733px;width:423px;height:29px;background:#5e5e5e;"></div>
<div style="left:1616px;top:734.0px;height:28px;line-height:28px;font-size:14px;color:#1a1a1a;font-weight:400;font-family:'Liberation Sans',sans-serif;white-space:pre;">A3</div>
<div style="left:1188px;top:836px;width:421px;height:29px;background:#5e5e5e;"></div>
<div style="left:1192px;top:837.0px;height:28px;line-height:28px;font-size:14px;color:#1a1a1a;font-weight:400;font-family:'Liberation Sans',sans-serif;white-space:pre;">F#3</div>
<div style="left:257px;top:1102px;width:1778px;height:3px;background:#262626;"></div>
<div style="left:257px;top:1105px;width:1778px;height:77px;background:#363636;"></div>
<div style="left:763px;top:1105px;width:424px;height:77px;background:#3a3a3a;"></div>
<div style="left:1611px;top:1105px;width:424px;height:77px;background:#3a3a3a;"></div>
<div style="left:365px;top:1105px;width:1px;height:77px;background:rgba(0,0,0,0.06);"></div>
<div style="left:391px;top:1105px;width:1px;height:77px;background:rgba(0,0,0,0.06);"></div>
<div style="left:418px;top:1105px;width:1px;height:77px;background:rgba(0,0,0,0.06);"></div>
<div style="left:444px;top:1105px;width:1px;height:77px;background:rgba(0,0,0,0.13);"></div>
<div style="left:471px;top:1105px;width:1px;height:77px;background:rgba(0,0,0,0.06);"></div>
<div style="left:497px;top:1105px;width:1px;height:77px;background:rgba(0,0,0,0.06);"></div>
<div style="left:524px;top:1105px;width:1px;height:77px;background:rgba(0,0,0,0.06);"></div>
<div style="left:550px;top:1105px;width:1px;height:77px;background:rgba(0,0,0,0.13);"></div>
<div style="left:577px;top:1105px;width:1px;height:77px;background:rgba(0,0,0,0.06);"></div>
<div style="left:604px;top:1105px;width:1px;height:77px;background:rgba(0,0,0,0.06);"></div>
<div style="left:630px;top:1105px;width:1px;height:77px;background:rgba(0,0,0,0.06);"></div>
<div style="left:657px;top:1105px;width:1px;height:77px;background:rgba(0,0,0,0.13);"></div>
<div style="left:683px;top:1105px;width:1px;height:77px;background:rgba(0,0,0,0.06);"></div>
<div style="left:710px;top:1105px;width:1px;height:77px;background:rgba(0,0,0,0.06);"></div>
<div style="left:736px;top:1105px;width:1px;height:77px;background:rgba(0,0,0,0.06);"></div>
<div style="left:763px;top:1105px;width:1px;height:77px;background:rgba(0,0,0,0.2);"></div>
<div style="left:789px;top:1105px;width:1px;height:77px;background:rgba(0,0,0,0.06);"></div>
<div style="left:816px;top:1105px;width:1px;height:77px;background:rgba(0,0,0,0.06);"></div>
<div style="left:842px;top:1105px;width:1px;height:77px;background:rgba(0,0,0,0.06);"></div>
<div style="left:869px;top:1105px;width:1px;height:77px;background:rgba(0,0,0,0.13);"></div>
<div style="left:895px;top:1105px;width:1px;height:77px;background:rgba(0,0,0,0.06);"></div>
<div style="left:922px;top:1105px;width:1px;height:77px;background:rgba(0,0,0,0.06);"></div>
<div style="left:948px;top:1105px;width:1px;height:77px;background:rgba(0,0,0,0.06);"></div>
<div style="left:975px;top:1105px;width:1px;height:77px;background:rgba(0,0,0,0.13);"></div>
<div style="left:1001px;top:1105px;width:1px;height:77px;background:rgba(0,0,0,0.06);"></div>
<div style="left:1028px;top:1105px;width:1px;height:77px;background:rgba(0,0,0,0.06);"></div>
<div style="left:1054px;top:1105px;width:1px;height:77px;background:rgba(0,0,0,0.06);"></div>
<div style="left:1081px;top:1105px;width:1px;height:77px;background:rgba(0,0,0,0.13);"></div>
<div style="left:1108px;top:1105px;width:1px;height:77px;background:rgba(0,0,0,0.06);"></div>
<div style="left:1134px;top:1105px;width:1px;height:77px;background:rgba(0,0,0,0.06);"></div>
<div style="left:1161px;top:1105px;width:1px;height:77px;background:rgba(0,0,0,0.06);"></div>
<div style="left:1187px;top:1105px;width:1px;height:77px;background:rgba(0,0,0,0.2);"></div>
<div style="left:1214px;top:1105px;width:1px;height:77px;background:rgba(0,0,0,0.06);"></div>
<div style="left:1240px;top:1105px;width:1px;height:77px;background:rgba(0,0,0,0.06);"></div>
<div style="left:1267px;top:1105px;width:1px;height:77px;background:rgba(0,0,0,0.06);"></div>
<div style="left:1293px;top:1105px;width:1px;height:77px;background:rgba(0,0,0,0.13);"></div>
<div style="left:1320px;top:1105px;width:1px;height:77px;background:rgba(0,0,0,0.06);"></div>
<div style="left:1346px;top:1105px;width:1px;height:77px;background:rgba(0,0,0,0.06);"></div>
<div style="left:1373px;top:1105px;width:1px;height:77px;background:rgba(0,0,0,0.06);"></div>
<div style="left:1399px;top:1105px;width:1px;height:77px;background:rgba(0,0,0,0.13);"></div>
<div style="left:1426px;top:1105px;width:1px;height:77px;background:rgba(0,0,0,0.06);"></div>
<div style="left:1452px;top:1105px;width:1px;height:77px;background:rgba(0,0,0,0.06);"></div>
<div style="left:1479px;top:1105px;width:1px;height:77px;background:rgba(0,0,0,0.06);"></div>
<div style="left:1505px;top:1105px;width:1px;height:77px;background:rgba(0,0,0,0.13);"></div>
<div style="left:1532px;top:1105px;width:1px;height:77px;background:rgba(0,0,0,0.06);"></div>
<div style="left:1558px;top:1105px;width:1px;height:77px;background:rgba(0,0,0,0.06);"></div>
<div style="left:1585px;top:1105px;width:1px;height:77px;background:rgba(0,0,0,0.06);"></div>
<div style="left:1611px;top:1105px;width:1px;height:77px;background:rgba(0,0,0,0.2);"></div>
<div style="left:1638px;top:1105px;width:1px;height:77px;background:rgba(0,0,0,0.06);"></div>
<div style="left:1665px;top:1105px;width:1px;height:77px;background:rgba(0,0,0,0.06);"></div>
<div style="left:1691px;top:1105px;width:1px;height:77px;background:rgba(0,0,0,0.06);"></div>
<div style="left:1718px;top:1105px;width:1px;height:77px;background:rgba(0,0,0,0.13);"></div>
<div style="left:1744px;top:1105px;width:1px;height:77px;background:rgba(0,0,0,0.06);"></div>
<div style="left:1771px;top:1105px;width:1px;height:77px;background:rgba(0,0,0,0.06);"></div>
<div style="left:1797px;top:1105px;width:1px;height:77px;background:rgba(0,0,0,0.06);"></div>
<div style="left:1824px;top:1105px;width:1px;height:77px;background:rgba(0,0,0,0.13);"></div>
<div style="left:1850px;top:1105px;width:1px;height:77px;background:rgba(0,0,0,0.06);"></div>
<div style="left:1877px;top:1105px;width:1px;height:77px;background:rgba(0,0,0,0.06);"></div>
<div style="left:1903px;top:1105px;width:1px;height:77px;background:rgba(0,0,0,0.06);"></div>
<div style="left:1930px;top:1105px;width:1px;height:77px;background:rgba(0,0,0,0.13);"></div>
<div style="left:1956px;top:1105px;width:1px;height:77px;background:rgba(0,0,0,0.06);"></div>
<div style="left:1983px;top:1105px;width:1px;height:77px;background:rgba(0,0,0,0.06);"></div>
<div style="left:2009px;top:1105px;width:1px;height:77px;background:rgba(0,0,0,0.06);"></div>
<div style="left:337px;top:1105px;width:2px;height:77px;background:#9a9a9a;"></div>
<div style="left:329px;top:1109px;width:9px;height:2px;background:#9a9a9a;"></div>
<div style="left:334px;top:1126px;width:4px;height:2px;background:#9a9a9a;"></div>
<div style="left:329px;top:1144px;width:9px;height:2px;background:#9a9a9a;"></div>
<div style="left:334px;top:1159px;width:4px;height:2px;background:#9a9a9a;"></div>
<div style="left:329px;top:1176px;width:9px;height:2px;background:#9a9a9a;"></div>
<div style="left:-675px;width:1000px;text-align:right;top:1099.0px;height:28px;line-height:28px;font-size:14px;color:#b0b0b0;font-weight:400;font-family:'Liberation Sans',sans-serif;white-space:pre;">127</div>
<div style="left:-675px;width:1000px;text-align:right;top:1130.0px;height:28px;line-height:28px;font-size:14px;color:#b0b0b0;font-weight:400;font-family:'Liberation Sans',sans-serif;white-space:pre;">64</div>
<div style="left:-675px;width:1000px;text-align:right;top:1160.0px;height:28px;line-height:28px;font-size:14px;color:#b0b0b0;font-weight:400;font-family:'Liberation Sans',sans-serif;white-space:pre;">1</div>
<svg style="left:260px;top:1108px;" width="14" height="16" viewBox="0 0 14 16"><rect x="1" y="10" width="2" height="4" fill="#8a8a8a"/><rect x="4.5" y="8" width="2" height="6" fill="#8a8a8a"/><rect x="8" y="5" width="2" height="9" fill="#8a8a8a"/><rect x="11.5" y="1" width="2" height="13" fill="#8a8a8a"/></svg>
<div style="left:342px;top:1123px;width:849px;height:2px;background:#a8d8e8;"></div>
<div style="left:1191px;top:1123px;width:425px;height:2px;background:#141414;"></div>
<div style="left:1616px;top:1119px;width:419px;height:2px;background:#141414;"></div>
<svg style="left:336px;top:1118px;" width="12" height="12" viewBox="0 0 12 12"><circle cx="6" cy="6" r="4.5" fill="#a8d8e8" stroke="#2a4048" stroke-width="1"/></svg>
<svg style="left:1185px;top:1118px;" width="12" height="12" viewBox="0 0 12 12"><circle cx="6" cy="6" r="4.3" fill="#363636" stroke="#141414" stroke-width="1.5"/></svg>
<svg style="left:1610px;top:1114px;" width="12" height="12" viewBox="0 0 12 12"><circle cx="6" cy="6" r="4.3" fill="#3a3a3a" stroke="#141414" stroke-width="1.5"/></svg>
<div style="left:257px;top:1182px;width:1778px;height:1px;background:#262626;"></div>
<div style="left:257px;top:1183px;width:1778px;height:24px;background:#363636;border-radius:0 0 5px 5px;"></div>
<div style="left:261px;top:1187px;width:18px;height:17px;background:#ffab52;border:1px solid #1a1a1a;box-sizing:border-box;"></div>
<svg style="left:261px;top:1187px;" width="18" height="17" viewBox="0 0 18 17"><circle cx="6" cy="8.5" r="2.2" fill="#111"/><line x1="6" y1="8.5" x2="14" y2="8.5" stroke="#111" stroke-width="1.6"/></svg>
<svg style="left:283px;top:1190px;" width="12" height="11" viewBox="0 0 12 11"><polygon points="1,2 11,2 6,9" fill="#b0b0b0"/></svg>
<div style="left:297px;top:1183px;width:2px;height:24px;background:#2c2c2c;"></div>
<div style="left:303px;top:1180.0px;height:30px;line-height:30px;font-size:15px;color:#bababa;font-weight:400;font-family:'Liberation Sans',sans-serif;white-space:pre;">Velocity</div>
<div style="left:365px;top:1187px;width:90px;height:18px;background:#1e1e1e;border-radius:9px;"></div>
<div style="left:-90px;width:1000px;text-align:center;top:1181.0px;height:30px;line-height:30px;font-size:15px;color:#c4c4c4;font-weight:400;font-family:'Liberation Sans',sans-serif;white-space:pre;">Randomize</div>
<div style="left:461px;top:1186px;width:54px;height:18px;background:#1e1e1e;"></div>
<div style="left:462px;top:1187px;width:40px;height:16px;background:#00788a;"></div>
<div style="left:-12.0px;width:1000px;text-align:center;top:1180.5px;height:30px;line-height:30px;font-size:15px;color:#b8dde4;font-weight:400;font-family:'Liberation Sans',sans-serif;white-space:pre;">100</div>
<div style="left:522px;top:1187px;width:1px;height:17px;background:#2c2c2c;"></div>
<div style="left:531px;top:1180.0px;height:30px;line-height:30px;font-size:15px;color:#bababa;font-weight:400;font-family:'Liberation Sans',sans-serif;white-space:pre;">Ramp</div>
<div style="left:575px;top:1186px;width:54px;height:18px;background:#1e1e1e;"></div>
<div style="left:576px;top:1187px;width:40px;height:16px;background:#00788a;"></div>
<div style="left:102.0px;width:1000px;text-align:center;top:1180.5px;height:30px;line-height:30px;font-size:15px;color:#b8dde4;font-weight:400;font-family:'Liberation Sans',sans-serif;white-space:pre;">100</div>
<div style="left:635px;top:1186px;width:53px;height:18px;background:#1e1e1e;"></div>
<div style="left:636px;top:1187px;width:51px;height:16px;background:#00788a;"></div>
<div style="left:161.5px;width:1000px;text-align:center;top:1180.5px;height:30px;line-height:30px;font-size:15px;color:#b8dde4;font-weight:400;font-family:'Liberation Sans',sans-serif;white-space:pre;">127</div>
<div style="left:696px;top:1187px;width:1px;height:17px;background:#2c2c2c;"></div>
<div style="left:704px;top:1180.0px;height:30px;line-height:30px;font-size:15px;color:#bababa;font-weight:400;font-family:'Liberation Sans',sans-serif;white-space:pre;">Deviation</div>
<div style="left:775px;top:1186px;width:83px;height:18px;background:#1e1e1e;"></div>
<div style="left:316.5px;width:1000px;text-align:center;top:1180.5px;height:30px;line-height:30px;font-size:15px;color:#c4c4c4;font-weight:400;font-family:'Liberation Sans',sans-serif;white-space:pre;">0</div>
<svg style="left:15px;top:1222px;" width="23" height="23" viewBox="0 0 23 23"><circle cx="11.5" cy="11.5" r="10.5" fill="#444444"/><rect x="10" y="9" width="3" height="8" fill="#262626"/><circle cx="11.5" cy="6" r="1.6" fill="#262626"/></svg>
<div style="left:60px;top:1220px;width:1371px;height:27px;background:#363636;border-radius:4px;"></div>
<div style="left:1444px;top:1220px;width:27px;height:27px;background:#ffab52;border-radius:3px 0 0 3px;"></div>
<svg style="left:1444px;top:1220px;" width="27" height="27" viewBox="0 0 27 27"><polygon points="13.5,8 19.5,18 7.5,18" fill="#111"/></svg>
<div style="left:1472px;top:1217px;width:285px;height:32px;background:#3a3a3a;border:3px solid #9a9a9a;box-sizing:border-box;"></div>
<div style="left:1476px;top:1226px;width:138px;height:1.5px;background:#1e1e1e;"></div>
<div style="left:1476px;top:1230px;width:138px;height:1.5px;background:#1e1e1e;"></div>
<div style="left:1476px;top:1234.5px;width:138px;height:1.5px;background:#1e1e1e;"></div>
<div style="left:1476px;top:1239px;width:138px;height:1.5px;background:#1e1e1e;"></div>
<div style="left:1614px;top:1233px;width:72px;height:1.5px;background:#1e1e1e;"></div>
<div style="left:1686px;top:1228.5px;width:66px;height:1.5px;background:#1e1e1e;"></div>
<div style="left:1770px;top:1220px;width:26px;height:27px;background:#363636;border-radius:3px 0 0 3px;"></div>
<svg style="left:1770px;top:1220px;" width="26" height="27" viewBox="0 0 26 27"><polygon points="9,8 18,13.5 9,19" fill="#c8c8c8"/></svg>
<div style="left:1797px;top:1220px;width:52px;height:27px;background:#363636;"></div>
<div style="left:1322px;width:1000px;text-align:center;top:1218.5px;height:30px;line-height:30px;font-size:15px;color:#c4c4c4;font-weight:400;font-family:'Liberation Sans',sans-serif;white-space:pre;">Keys</div>
<svg style="left:1848px;top:1219px;" width="122" height="29" viewBox="0 0 122 29"><rect x="1" y="1.5" width="3" height="26" fill="#2c2c2c"/><circle cx="2.5" cy="3" r="1.2" fill="#f6a04c"/><rect x="6" y="1.5" width="75" height="26" fill="#262626"/><rect x="6" y="1.5" width="75" height="2.5" fill="#333"/><rect x="7" y="2" width="2" height="1.5" fill="#f6a04c"/><rect x="24.5" y="4.3" width="40" height="23.4" fill="#141414"/><g fill="none" stroke="#a06a30" stroke-width="0.8"><path d="M26,16 A18.5,13 0 0 1 63,16"/><path d="M32,16 A12.5,9 0 0 1 57,16"/><path d="M35,16 A9.5,7 0 0 1 54,16"/><path d="M38,16 A6.5,5 0 0 1 51,16"/></g><path d="M36,24 L40,19.5 H53 L58,24" fill="none" stroke="#1a9ab0" stroke-width="1"/><circle cx="40.5" cy="21.5" r="1.2" fill="#e89a48"/><circle cx="53.5" cy="21.5" r="1.2" fill="#e89a48"/><g fill="none" stroke="#1a9ab0" stroke-width="1"><path d="M9,8.5 A2.5,2.5 0 1 1 11.5,10"/><path d="M18.5,8.5 A2.5,2.5 0 1 1 21,10"/><path d="M9,24.5 A2.5,2.5 0 1 1 11.5,26"/><path d="M18.5,24.5 A2.5,2.5 0 1 1 21,26"/><path d="M67,8.5 A2.5,2.5 0 1 1 69.5,10"/><path d="M74,24.5 A2.5,2.5 0 1 1 76.5,26"/></g><rect x="8" y="13" width="6.5" height="2" fill="#d08a40"/><rect x="17" y="13" width="6.5" height="2" fill="#d08a40"/><rect x="14.5" y="22" width="3" height="5" fill="#c08040"/><rect x="65" y="21" width="8" height="2" fill="#d08a40"/><rect x="67" y="14" width="8" height="1.5" fill="#3a3a3a"/><rect x="74" y="8" width="5" height="4" fill="#333"/><rect x="74" y="15" width="5" height="4" fill="#333"/><rect x="83" y="1.5" width="36" height="26" fill="#262626"/><rect x="83" y="1.5" width="36" height="2.5" fill="#333"/><rect x="84" y="2" width="2" height="1.5" fill="#f6a04c"/><rect x="84" y="4.5" width="34" height="14.5" fill="#141414"/><path d="M84,15.5 H92 L99,10 H118" fill="none" stroke="#1a9ab0" stroke-width="1"/><rect x="91" y="16.5" width="4" height="1" fill="#c07a30"/><g fill="none" stroke="#444" stroke-width="0.9"><path d="M94,25 A2.5,2.5 0 1 1 99,25"/><path d="M101,25 A2.5,2.5 0 1 1 106,25"/><path d="M111,25 A2.5,2.5 0 1 1 116,25"/></g><path d="M85,25 A2.5,2.5 0 1 1 89,23" fill="none" stroke="#1a9ab0" stroke-width="0.9"/></svg>
<svg style="left:1990px;top:1222px;" width="40" height="23" viewBox="0 0 40 23"><g fill="#444444"><rect x="2" y="9" width="2.5" height="12"/><rect x="7" y="5" width="2.5" height="16"/><rect x="12" y="11" width="2.5" height="10"/><rect x="17" y="3" width="2.5" height="18"/></g><polygon points="27,7 37,7 32,13" fill="#444444"/></svg>
</body></html>
